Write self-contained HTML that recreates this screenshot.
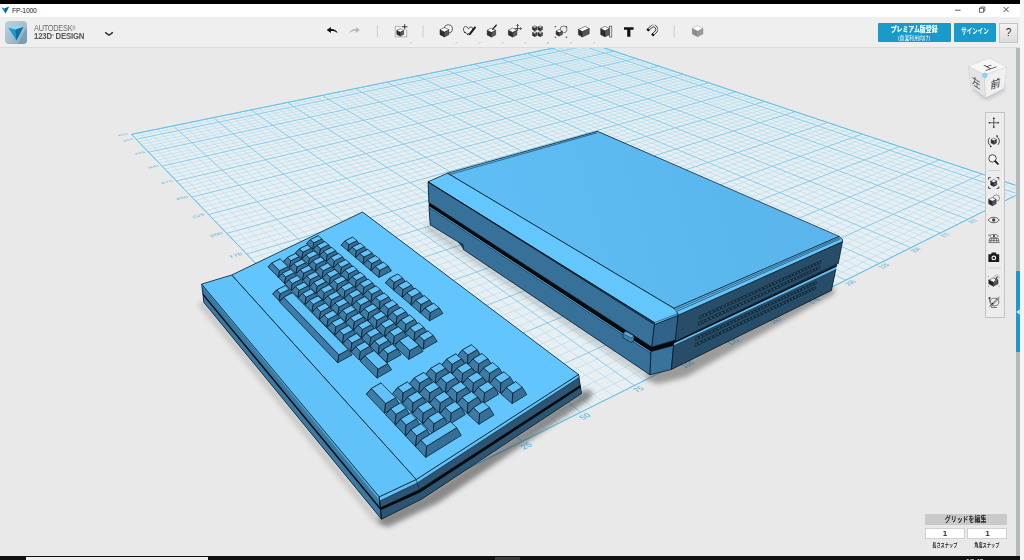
<!DOCTYPE html>
<html lang="ja"><head><meta charset="utf-8"><title>FP-1000</title>
<style>
html,body{margin:0;padding:0;background:#e9e9e9;}
body{width:1024px;height:560px;overflow:hidden;position:relative;font-family:"Liberation Sans","Noto Sans CJK JP",sans-serif;}
.abs{position:absolute;}
#blk{left:0;top:0;width:1020px;height:4px;background:#000;}
#rstrip{left:1020px;top:0;width:4px;height:560px;background:#f5f5f5;}
#title{left:0;top:4px;width:1020px;height:13px;background:#fff;}
#title span{position:absolute;left:12px;top:1.5px;font-size:6.8px;color:#222;letter-spacing:-0.2px;line-height:9px;}
#tb{left:0;top:17px;width:1020px;height:29.6px;background:#efefef;border-bottom:1.4px solid #dcdcdc;}
#vp{left:0;top:48px;width:1020px;height:508px;background:#e9e9e9;}
#scene{left:0;top:0;}
#bot{left:0;top:556px;width:1020px;height:4px;background:#101010;overflow:hidden;}
#bot i{position:absolute;top:0.5px;height:4px;display:block;}
#scroll{left:1015.6px;top:48px;width:4.4px;height:508px;background:#b1b9b9;}
#scrollb{left:1015.6px;top:271.4px;width:4.4px;height:81px;background:#1a9bcb;}
.btn{background:#189bcb;color:#fff;text-align:center;font-weight:bold;border-radius:1px;}
#prem{left:878.3px;top:23px;width:72.3px;height:18.6px;}
#prem b{display:block;font-size:7.6px;line-height:9px;margin-top:2px;white-space:nowrap;transform:scaleX(0.78);transform-origin:50% 50%;margin-left:-10px;margin-right:-10px;}
#prem s{display:block;font-size:5.4px;white-space:nowrap;transform:scaleX(0.9);transform-origin:50% 50%;line-height:6px;text-decoration:none;font-weight:normal;margin-top:0.5px;}
#sign{left:953.9px;top:23px;width:42px;height:18.6px;font-size:7.6px;line-height:18.6px;white-space:nowrap;}
#sign span{display:inline-block;transform:scaleX(0.73);transform-origin:50% 50%;margin:0 -8px;}
#help{left:999.2px;top:23px;width:16.8px;height:17.6px;background:linear-gradient(#f4f4f4,#dcdcdc);border:0.5px solid #c4c4c4;color:#222;font-size:10px;font-weight:normal;text-align:center;line-height:18px;}
#nav{left:984.5px;top:112px;width:18px;height:203.5px;background:#ececec;border:0.6px solid #c4c4c4;}
#gridhdr{left:924.8px;top:513.5px;width:82px;height:11px;background:#c9c9c9;font-size:7.6px;font-weight:bold;color:#222;text-align:center;line-height:11px;white-space:nowrap;}
#gridhdr span{display:inline-block;transform:scaleX(0.78);transform-origin:50% 50%;}
.inp{top:527.9px;width:38px;height:9.4px;background:#fff;border:0.5px solid #d0d0d0;font-size:8px;font-weight:bold;text-align:center;line-height:10px;color:#333;}
.snl{top:541.5px;width:50px;font-size:5.6px;font-weight:bold;color:#222;text-align:center;line-height:7px;white-space:nowrap;}
.snl span{display:inline-block;transform:scaleX(0.75);transform-origin:50% 50%;}
#logo{left:4.5px;top:21px;width:22.5px;height:22.5px;border-radius:4px;background:linear-gradient(135deg,#c3d1da 0%,#a9bfcc 50%,#7fa3ba 100%);}
#brand1{left:34px;top:23.5px;font-size:8.4px;color:#6a6a6a;letter-spacing:-0.3px;line-height:9px;transform:scaleX(0.88);transform-origin:0 0;}
#brand2{left:34px;top:32px;font-size:8.4px;color:#555;font-weight:bold;letter-spacing:-0.2px;line-height:9px;transform:scaleX(0.93);transform-origin:0 0;}
</style></head><body>
<div class="abs" id="vp"></div>
<svg class="abs" id="scene" width="1024" height="560" viewBox="0 0 1024 560">
<defs>
<clipPath id="vpclip"><rect x="0" y="48" width="1015.6" height="508"/></clipPath>
<filter id="blur5" x="-20%" y="-20%" width="140%" height="140%"><feGaussianBlur stdDeviation="4"/></filter>
<filter id="blur3" x="-20%" y="-20%" width="140%" height="140%"><feGaussianBlur stdDeviation="2.5"/></filter>
</defs>
<g clip-path="url(#vpclip)">
<polygon points="458.0,473.4 1027.8,189.4 585.3,41.6 131.5,134.4" fill="#e8eff2" />
<path d="M471.3 466.8L140.0 132.7M449.3 464.4L1018.3 186.2M484.4 460.3L148.5 130.9M440.8 455.6L1009.0 183.1M497.2 453.9L156.9 129.2M432.6 447.1L999.8 180.1M509.8 447.6L165.2 127.5M424.5 438.7L990.8 177.0M534.3 435.4L181.5 124.2M409.0 422.6L973.1 171.1M546.3 429.4L189.6 122.5M401.5 414.8L964.4 168.2M558.0 423.6L197.5 120.9M394.2 407.2L955.9 165.4M569.5 417.9L205.4 119.3M387.1 399.8L947.5 162.6M591.8 406.7L221.0 116.1M373.3 385.5L931.0 157.1M602.7 401.3L228.7 114.5M366.7 378.6L923.0 154.4M613.4 395.9L236.3 113.0M360.2 371.9L915.0 151.7M624.0 390.7L243.8 111.4M353.8 365.3L907.2 149.1M644.5 380.5L258.6 108.4M341.5 352.5L891.8 144.0M654.5 375.5L266.0 106.9M335.6 346.3L884.3 141.5M664.3 370.6L273.2 105.4M329.7 340.3L876.9 139.0M674.0 365.8L280.4 104.0M324.0 334.3L869.6 136.6M692.8 356.4L294.6 101.1M313.0 322.9L855.3 131.8M702.0 351.8L301.6 99.6M307.6 317.3L848.2 129.4M711.1 347.3L308.5 98.2M302.3 311.8L841.3 127.1M720.0 342.8L315.4 96.8M297.2 306.5L834.4 124.8M737.4 334.1L328.9 94.0M287.2 296.1L821.0 120.3M745.9 329.9L335.6 92.7M282.3 291.0L814.4 118.1M754.3 325.7L342.2 91.3M277.6 286.1L807.9 115.9M762.6 321.6L348.8 90.0M272.9 281.3L801.5 113.8M778.7 313.6L361.8 87.3M263.8 271.8L788.9 109.6M786.6 309.6L368.2 86.0M259.4 267.2L782.7 107.5M794.3 305.8L374.5 84.7M255.1 262.7L776.6 105.5M802.0 302.0L380.8 83.4M250.8 258.3L770.5 103.5M817.0 294.5L393.2 80.9M242.5 249.7L758.7 99.5M824.3 290.8L399.3 79.6M238.5 245.5L752.9 97.6M831.5 287.2L405.4 78.4M234.5 241.4L747.1 95.6M838.6 283.7L411.4 77.2M230.6 237.3L741.4 93.7M852.6 276.7L423.3 74.7M223.0 229.5L730.3 90.0M859.4 273.3L429.2 73.5M219.3 225.6L724.8 88.2M866.1 270.0L435.1 72.3M215.7 221.8L719.3 86.4M872.8 266.7L440.8 71.1M212.1 218.1L714.0 84.6M885.8 260.2L452.2 68.8M205.1 210.9L703.4 81.0M892.2 257.0L457.9 67.7M201.7 207.3L698.3 79.3M898.5 253.9L463.5 66.5M198.4 203.9L693.1 77.6M904.7 250.8L469.0 65.4M195.1 200.4L688.1 75.9M916.8 244.7L480.0 63.1M188.6 193.8L678.1 72.6M922.8 241.7L485.4 62.0M185.5 190.5L673.2 70.9M928.7 238.8L490.8 60.9M182.4 187.3L668.3 69.3M934.5 235.9L496.1 59.8M179.4 184.1L663.6 67.7M945.9 230.2L506.7 57.7M173.4 177.9L654.1 64.6M951.5 227.4L511.9 56.6M170.5 174.9L649.5 63.0M957.1 224.7L517.0 55.6M167.6 171.9L644.9 61.5M962.5 221.9L522.2 54.5M164.8 169.0L640.3 60.0M973.2 216.6L532.3 52.4M159.3 163.2L631.4 57.0M978.5 214.0L537.3 51.4M156.6 160.4L627.0 55.5M983.7 211.4L542.3 50.4M153.9 157.7L622.6 54.0M988.8 208.8L547.2 49.4M151.3 154.9L618.3 52.6M998.9 203.8L557.0 47.4M146.1 149.6L609.8 49.8M1003.9 201.3L561.8 46.4M143.6 147.0L605.6 48.4M1008.8 198.9L566.6 45.4M141.1 144.4L601.5 47.0M1013.6 196.5L571.3 44.5M138.7 141.8L597.4 45.6M1023.1 191.7L580.7 42.5M133.9 136.9L589.3 42.9" stroke="#a6d9ee" stroke-width="0.65" fill="none" opacity="0.8"/>
<path d="M458.0 473.4L131.5 134.4M458.0 473.4L1027.8 189.4M522.2 441.4L173.4 125.9M416.7 430.5L981.9 174.1M580.7 412.2L213.3 117.7M380.1 392.6L939.2 159.8M634.3 385.5L251.3 109.9M347.6 358.8L899.5 146.5M683.5 361.0L287.5 102.5M318.4 328.5L862.4 134.1M728.8 338.4L322.2 95.4M292.1 301.2L827.7 122.5M770.7 317.6L355.3 88.6M268.3 276.5L795.1 111.7M809.5 298.2L387.0 82.2M246.6 254.0L764.6 101.5M845.7 280.2L417.4 75.9M226.8 233.4L735.8 91.9M879.3 263.4L446.6 70.0M208.6 214.5L708.7 82.8M910.8 247.7L474.5 64.3M191.8 197.1L683.1 74.2M940.3 233.0L501.4 58.8M176.4 181.0L658.8 66.1M967.9 219.3L527.2 53.5M162.0 166.1L635.8 58.5M993.9 206.3L552.1 48.4M148.7 152.2L614.0 51.2M1018.4 194.1L576.0 43.5M136.2 139.3L593.3 44.3M1027.8 189.4L585.3 41.6M131.5 134.4L585.3 41.6" stroke="#78c8e9" stroke-width="0.85" fill="none"/>
<polygon points="458.0,473.4 1027.8,189.4 585.3,41.6 131.5,134.4" fill="none" stroke="#66c1e7" stroke-width="0.95" stroke-linejoin="round" />
<g font-family="Liberation Sans, sans-serif" fill="#47b1de"><text transform="matrix(2.138 -0.629 0.822 0.861 242.93 254.39)" font-size="3.6" text-anchor="end">175</text><text transform="matrix(2.072 -0.575 0.753 0.789 223.24 233.76)" font-size="3.6" text-anchor="end">200</text><text transform="matrix(2.009 -0.528 0.692 0.725 205.17 214.83)" font-size="3.6" text-anchor="end">225</text><text transform="matrix(1.949 -0.487 0.639 0.669 188.53 197.40)" font-size="3.6" text-anchor="end">250</text><text transform="matrix(1.892 -0.450 0.591 0.619 173.16 181.30)" font-size="3.6" text-anchor="end">275</text><text transform="matrix(1.838 -0.417 0.549 0.575 158.92 166.37)" font-size="3.6" text-anchor="end">300</text><text transform="matrix(1.788 -0.388 0.510 0.535 145.68 152.50)" font-size="3.6" text-anchor="end">325</text><text transform="matrix(1.739 -0.361 0.476 0.499 133.35 139.58)" font-size="3.6" text-anchor="end">350</text><text transform="matrix(1.719 -0.351 0.462 0.484 128.18 134.17)" font-size="3.6" text-anchor="end">360</text><text transform="matrix(2.460 -1.244 1.868 1.693 528.15 447.82)" font-size="3.3" text-anchor="middle">25</text><text transform="matrix(2.245 -1.135 1.926 1.546 586.95 418.09)" font-size="3.3" text-anchor="middle">50</text><text transform="matrix(2.056 -1.040 1.967 1.417 640.71 390.91)" font-size="3.3" text-anchor="middle">75</text><text transform="matrix(1.890 -0.956 1.994 1.304 690.03 365.97)" font-size="3.3" text-anchor="middle">100</text><text transform="matrix(1.744 -0.882 2.012 1.204 735.46 343.01)" font-size="3.3" text-anchor="middle">125</text><text transform="matrix(1.614 -0.816 2.021 1.115 777.43 321.79)" font-size="3.3" text-anchor="middle">150</text><text transform="matrix(1.498 -0.757 2.023 1.035 816.32 302.13)" font-size="3.3" text-anchor="middle">175</text><text transform="matrix(1.394 -0.705 2.020 0.964 852.46 283.85)" font-size="3.3" text-anchor="middle">200</text><text transform="matrix(1.300 -0.657 2.012 0.900 886.14 266.83)" font-size="3.3" text-anchor="middle">225</text><text transform="matrix(1.216 -0.615 2.002 0.842 917.59 250.92)" font-size="3.3" text-anchor="middle">250</text><text transform="matrix(1.139 -0.576 1.988 0.790 947.03 236.04)" font-size="3.3" text-anchor="middle">275</text><text transform="matrix(1.070 -0.541 1.972 0.742 974.65 222.08)" font-size="3.3" text-anchor="middle">300</text><text transform="matrix(1.006 -0.509 1.955 0.699 1000.60 208.95)" font-size="3.3" text-anchor="middle">325</text><text transform="matrix(0.949 -0.480 1.936 0.659 1025.05 196.60)" font-size="3.3" text-anchor="middle">350</text></g>
<g filter="url(#blur3)" opacity="0.42"><polygon points="648.0,370.0 672.0,366.0 832.0,286.0 835.0,293.0 686.0,377.0 658.0,384.0 646.0,380.0" fill="#303030" /></g>
<g filter="url(#blur3)" opacity="0.16"><polygon points="430.0,222.0 650.0,372.0 645.0,379.0 424.0,230.0" fill="#333" /></g>
<polygon points="428.0,181.8 428.9,206.4 430.2,224.8 457.5,241.6 463.5,249.6 650.0,374.8 671.4,369.5 831.4,290.4 835.9,269.0 842.5,241.6 842.3,239.0 597.5,131.3 447.5,173.2" fill="#274a64" />
<polygon points="428.9,206.4 650.9,351.6 650.0,374.8 463.5,249.6 463.0,244.6 457.5,241.6 430.2,224.8" fill="#37719a" stroke="#09131b" stroke-width="0.7" stroke-linejoin="round" />
<polygon points="428.9,202.5 651.8,347.1 675.9,340.0 673.6,345.6 650.9,351.8 428.9,206.6" fill="#06090c" />
<line x1="429.5" y1="207.0" x2="650.9" y2="352.2" stroke="#5bb6ec" stroke-width="0.9" />
<line x1="429.5" y1="207.9" x2="650.9" y2="353.1" stroke="#09131b" stroke-width="0.4" />
<polygon points="650.9,351.6 673.6,345.4 671.4,369.5 650.0,374.8" fill="#38739b" stroke="#09131b" stroke-width="0.7" stroke-linejoin="round" />
<polygon points="673.6,345.4 835.9,269.0 831.4,290.4 671.4,369.5" fill="#284d68" stroke="#09131b" stroke-width="0.7" stroke-linejoin="round" />
<polygon points="673.6,345.6 835.9,269.2 836.5,266.6 674.4,343.0" fill="#5fbdf3" />
<polygon points="674.4,343.0 836.5,266.6 837.2,265.0 675.0,341.5" fill="#06090c" />
<polygon points="428.0,181.8 654.5,324.6 651.8,347.1 428.9,202.5" fill="#37719a" stroke="#09131b" stroke-width="0.7" stroke-linejoin="round" />
<polygon points="654.5,324.6 678.0,315.2 675.9,340.0 651.8,347.1" fill="#30638a" stroke="#09131b" stroke-width="0.7" stroke-linejoin="round" />
<polygon points="678.0,315.2 842.5,241.6 838.3,263.4 675.2,341.4" fill="#284d68" stroke="#09131b" stroke-width="0.7" stroke-linejoin="round" />
<polygon points="623.0,333.5 626.0,331.3 634.0,336.0 634.0,341.0 631.0,342.5 623.0,337.8" fill="#3f7fa8" stroke="#09131b" stroke-width="0.6" stroke-linejoin="round" />
<polygon points="623.0,333.5 626.0,331.3 634.0,336.0 631.0,338.0" fill="#5aa6d4" stroke="#09131b" stroke-width="0.4" stroke-linejoin="round" />
<defs><linearGradient id="gtop" gradientUnits="userSpaceOnUse" x1="470" y1="260" x2="800" y2="170"><stop offset="0" stop-color="#5fbef5"/><stop offset="1" stop-color="#59b5ec"/></linearGradient></defs>
<polygon points="447.5,173.2 597.5,131.3 839.3,236.4 674.0,308.4" fill="url(#gtop)" stroke="#09131b" stroke-width="0.7" stroke-linejoin="round" />
<polygon points="447.5,173.2 428.0,181.8 654.5,322.7 654.5,324.6 678.0,315.2 678.0,313.5 674.0,308.4" fill="#63c7fd" stroke="#09131b" stroke-width="0.7" stroke-linejoin="round" />
<line x1="654.5" y1="322.7" x2="678.0" y2="313.5" stroke="#09131b" stroke-width="0.5" />
<line x1="428.0" y1="181.8" x2="654.5" y2="322.7" stroke="#09131b" stroke-width="0.8" />
<polygon points="674.0,308.4 839.3,236.4 842.3,239.0 842.5,241.6 678.0,315.2 678.0,313.5" fill="#63c7fd" stroke="#09131b" stroke-width="0.6" stroke-linejoin="round" />
<polygon points="674.0,308.4 839.3,236.4 840.9,239.0 676.1,311.9" fill="#5cb9f0" />
<line x1="674.0" y1="308.4" x2="839.3" y2="236.4" stroke="#13222f" stroke-width="0.55" />
<line x1="675.0" y1="310.0" x2="840.0" y2="237.5" stroke="#13222f" stroke-width="0.55" />
<line x1="676.0" y1="311.8" x2="840.7" y2="238.7" stroke="#13222f" stroke-width="0.55" />
<line x1="449.5" y1="174.6" x2="597.0" y2="132.8" stroke="#09131b" stroke-width="0.5" />
<polygon points="699.4,316.3 702.0,315.1 702.0,317.7 699.4,318.9" fill="#30607f" stroke="#08121a" stroke-width="0.6" stroke-linejoin="round" /><polygon points="703.1,314.6 705.7,313.4 705.7,316.0 703.1,317.2" fill="#30607f" stroke="#08121a" stroke-width="0.6" stroke-linejoin="round" /><polygon points="706.8,312.9 709.4,311.7 709.4,314.3 706.8,315.5" fill="#30607f" stroke="#08121a" stroke-width="0.6" stroke-linejoin="round" /><polygon points="710.5,311.2 713.1,310.0 713.1,312.6 710.5,313.8" fill="#30607f" stroke="#08121a" stroke-width="0.6" stroke-linejoin="round" /><polygon points="714.2,309.5 716.8,308.3 716.8,310.9 714.2,312.1" fill="#30607f" stroke="#08121a" stroke-width="0.6" stroke-linejoin="round" /><polygon points="717.8,307.8 720.4,306.7 720.4,309.2 717.8,310.4" fill="#30607f" stroke="#08121a" stroke-width="0.6" stroke-linejoin="round" /><polygon points="721.5,306.2 724.0,305.0 724.0,307.6 721.5,308.8" fill="#30607f" stroke="#08121a" stroke-width="0.6" stroke-linejoin="round" /><polygon points="725.1,304.5 727.6,303.3 727.6,305.9 725.1,307.1" fill="#30607f" stroke="#08121a" stroke-width="0.6" stroke-linejoin="round" /><polygon points="728.7,302.9 731.2,301.7 731.2,304.3 728.7,305.5" fill="#30607f" stroke="#08121a" stroke-width="0.6" stroke-linejoin="round" /><polygon points="732.2,301.3 734.8,300.1 734.8,302.6 732.2,303.8" fill="#30607f" stroke="#08121a" stroke-width="0.6" stroke-linejoin="round" /><polygon points="735.8,299.6 738.3,298.5 738.3,301.0 735.8,302.2" fill="#30607f" stroke="#08121a" stroke-width="0.6" stroke-linejoin="round" /><polygon points="739.3,298.0 741.9,296.8 741.9,299.4 739.3,300.6" fill="#30607f" stroke="#08121a" stroke-width="0.6" stroke-linejoin="round" /><polygon points="742.8,296.4 745.4,295.2 745.4,297.8 742.8,298.9" fill="#30607f" stroke="#08121a" stroke-width="0.6" stroke-linejoin="round" /><polygon points="746.3,294.8 748.9,293.6 748.9,296.2 746.3,297.3" fill="#30607f" stroke="#08121a" stroke-width="0.6" stroke-linejoin="round" /><polygon points="749.8,293.2 752.3,292.1 752.3,294.6 749.8,295.7" fill="#30607f" stroke="#08121a" stroke-width="0.6" stroke-linejoin="round" /><polygon points="753.3,291.6 755.8,290.5 755.8,293.0 753.3,294.1" fill="#30607f" stroke="#08121a" stroke-width="0.6" stroke-linejoin="round" /><polygon points="756.7,290.1 759.2,288.9 759.2,291.4 756.7,292.6" fill="#30607f" stroke="#08121a" stroke-width="0.6" stroke-linejoin="round" /><polygon points="760.1,288.5 762.6,287.4 762.6,289.8 760.1,291.0" fill="#30607f" stroke="#08121a" stroke-width="0.6" stroke-linejoin="round" /><polygon points="763.5,286.9 766.0,285.8 766.0,288.3 763.5,289.4" fill="#30607f" stroke="#08121a" stroke-width="0.6" stroke-linejoin="round" /><polygon points="766.9,285.4 769.4,284.3 769.4,286.7 766.9,287.9" fill="#30607f" stroke="#08121a" stroke-width="0.6" stroke-linejoin="round" /><polygon points="770.3,283.9 772.7,282.7 772.7,285.2 770.3,286.3" fill="#30607f" stroke="#08121a" stroke-width="0.6" stroke-linejoin="round" /><polygon points="773.6,282.3 776.1,281.2 776.1,283.7 773.6,284.8" fill="#30607f" stroke="#08121a" stroke-width="0.6" stroke-linejoin="round" /><polygon points="776.9,280.8 779.4,279.7 779.4,282.1 776.9,283.3" fill="#30607f" stroke="#08121a" stroke-width="0.6" stroke-linejoin="round" /><polygon points="780.2,279.3 782.7,278.2 782.7,280.6 780.2,281.7" fill="#30607f" stroke="#08121a" stroke-width="0.6" stroke-linejoin="round" /><polygon points="783.5,277.8 785.9,276.7 785.9,279.1 783.5,280.2" fill="#30607f" stroke="#08121a" stroke-width="0.6" stroke-linejoin="round" /><polygon points="786.8,276.3 789.2,275.2 789.2,277.6 786.8,278.7" fill="#30607f" stroke="#08121a" stroke-width="0.6" stroke-linejoin="round" /><polygon points="790.0,274.8 792.4,273.7 792.4,276.1 790.0,277.2" fill="#30607f" stroke="#08121a" stroke-width="0.6" stroke-linejoin="round" /><polygon points="793.2,273.3 795.6,272.2 795.6,274.6 793.2,275.7" fill="#30607f" stroke="#08121a" stroke-width="0.6" stroke-linejoin="round" /><polygon points="796.4,271.9 798.8,270.8 798.8,273.2 796.4,274.3" fill="#30607f" stroke="#08121a" stroke-width="0.6" stroke-linejoin="round" /><polygon points="799.6,270.4 802.0,269.3 802.0,271.7 799.6,272.8" fill="#30607f" stroke="#08121a" stroke-width="0.6" stroke-linejoin="round" /><polygon points="802.8,269.0 805.2,267.9 805.2,270.3 802.8,271.3" fill="#30607f" stroke="#08121a" stroke-width="0.6" stroke-linejoin="round" /><polygon points="805.9,267.5 808.3,266.5 808.3,268.8 805.9,269.9" fill="#30607f" stroke="#08121a" stroke-width="0.6" stroke-linejoin="round" /><polygon points="809.1,266.1 811.4,265.0 811.4,267.4 809.1,268.5" fill="#30607f" stroke="#08121a" stroke-width="0.6" stroke-linejoin="round" /><polygon points="812.2,264.7 814.5,263.6 814.5,266.0 812.2,267.0" fill="#30607f" stroke="#08121a" stroke-width="0.6" stroke-linejoin="round" /><polygon points="815.3,263.3 817.6,262.2 817.6,264.5 815.3,265.6" fill="#30607f" stroke="#08121a" stroke-width="0.6" stroke-linejoin="round" /><polygon points="818.3,261.9 820.7,260.8 820.7,263.1 818.3,264.2" fill="#30607f" stroke="#08121a" stroke-width="0.6" stroke-linejoin="round" /><polygon points="698.5,322.5 701.1,321.3 701.1,323.9 698.5,325.1" fill="#30607f" stroke="#08121a" stroke-width="0.6" stroke-linejoin="round" /><polygon points="702.2,320.8 704.8,319.5 704.8,322.2 702.2,323.4" fill="#30607f" stroke="#08121a" stroke-width="0.6" stroke-linejoin="round" /><polygon points="705.9,319.0 708.5,317.8 708.5,320.4 705.9,321.7" fill="#30607f" stroke="#08121a" stroke-width="0.6" stroke-linejoin="round" /><polygon points="709.6,317.3 712.2,316.1 712.2,318.7 709.6,319.9" fill="#30607f" stroke="#08121a" stroke-width="0.6" stroke-linejoin="round" /><polygon points="713.3,315.6 715.9,314.4 715.9,317.0 713.3,318.2" fill="#30607f" stroke="#08121a" stroke-width="0.6" stroke-linejoin="round" /><polygon points="716.9,313.9 719.5,312.7 719.5,315.3 716.9,316.5" fill="#30607f" stroke="#08121a" stroke-width="0.6" stroke-linejoin="round" /><polygon points="720.6,312.2 723.1,311.0 723.1,313.6 720.6,314.8" fill="#30607f" stroke="#08121a" stroke-width="0.6" stroke-linejoin="round" /><polygon points="724.2,310.6 726.7,309.4 726.7,312.0 724.2,313.1" fill="#30607f" stroke="#08121a" stroke-width="0.6" stroke-linejoin="round" /><polygon points="727.8,308.9 730.3,307.7 730.3,310.3 727.8,311.5" fill="#30607f" stroke="#08121a" stroke-width="0.6" stroke-linejoin="round" /><polygon points="731.3,307.2 733.9,306.1 733.9,308.6 731.3,309.8" fill="#30607f" stroke="#08121a" stroke-width="0.6" stroke-linejoin="round" /><polygon points="734.9,305.6 737.4,304.4 737.4,307.0 734.9,308.1" fill="#30607f" stroke="#08121a" stroke-width="0.6" stroke-linejoin="round" /><polygon points="738.4,303.9 741.0,302.8 741.0,305.3 738.4,306.5" fill="#30607f" stroke="#08121a" stroke-width="0.6" stroke-linejoin="round" /><polygon points="741.9,302.3 744.5,301.1 744.5,303.7 741.9,304.8" fill="#30607f" stroke="#08121a" stroke-width="0.6" stroke-linejoin="round" /><polygon points="745.4,300.7 748.0,299.5 748.0,302.0 745.4,303.2" fill="#30607f" stroke="#08121a" stroke-width="0.6" stroke-linejoin="round" /><polygon points="748.9,299.1 751.4,297.9 751.4,300.4 748.9,301.6" fill="#30607f" stroke="#08121a" stroke-width="0.6" stroke-linejoin="round" /><polygon points="752.4,297.5 754.9,296.3 754.9,298.8 752.4,300.0" fill="#30607f" stroke="#08121a" stroke-width="0.6" stroke-linejoin="round" /><polygon points="755.8,295.9 758.3,294.7 758.3,297.2 755.8,298.4" fill="#30607f" stroke="#08121a" stroke-width="0.6" stroke-linejoin="round" /><polygon points="759.2,294.3 761.7,293.1 761.7,295.6 759.2,296.8" fill="#30607f" stroke="#08121a" stroke-width="0.6" stroke-linejoin="round" /><polygon points="762.6,292.7 765.1,291.6 765.1,294.0 762.6,295.2" fill="#30607f" stroke="#08121a" stroke-width="0.6" stroke-linejoin="round" /><polygon points="766.0,291.1 768.5,290.0 768.5,292.5 766.0,293.6" fill="#30607f" stroke="#08121a" stroke-width="0.6" stroke-linejoin="round" /><polygon points="769.4,289.6 771.8,288.5 771.8,290.9 769.4,292.0" fill="#30607f" stroke="#08121a" stroke-width="0.6" stroke-linejoin="round" /><polygon points="772.7,288.0 775.2,286.9 775.2,289.4 772.7,290.5" fill="#30607f" stroke="#08121a" stroke-width="0.6" stroke-linejoin="round" /><polygon points="776.0,286.5 778.5,285.4 778.5,287.8 776.0,288.9" fill="#30607f" stroke="#08121a" stroke-width="0.6" stroke-linejoin="round" /><polygon points="779.3,285.0 781.8,283.8 781.8,286.3 779.3,287.4" fill="#30607f" stroke="#08121a" stroke-width="0.6" stroke-linejoin="round" /><polygon points="782.6,283.4 785.0,282.3 785.0,284.7 782.6,285.9" fill="#30607f" stroke="#08121a" stroke-width="0.6" stroke-linejoin="round" /><polygon points="785.9,281.9 788.3,280.8 788.3,283.2 785.9,284.3" fill="#30607f" stroke="#08121a" stroke-width="0.6" stroke-linejoin="round" /><polygon points="789.1,280.4 791.5,279.3 791.5,281.7 789.1,282.8" fill="#30607f" stroke="#08121a" stroke-width="0.6" stroke-linejoin="round" /><polygon points="792.3,278.9 794.7,277.8 794.7,280.2 792.3,281.3" fill="#30607f" stroke="#08121a" stroke-width="0.6" stroke-linejoin="round" /><polygon points="795.5,277.4 797.9,276.3 797.9,278.7 795.5,279.8" fill="#30607f" stroke="#08121a" stroke-width="0.6" stroke-linejoin="round" /><polygon points="798.7,276.0 801.1,274.9 801.1,277.2 798.7,278.3" fill="#30607f" stroke="#08121a" stroke-width="0.6" stroke-linejoin="round" /><polygon points="801.9,274.5 804.3,273.4 804.3,275.8 801.9,276.9" fill="#30607f" stroke="#08121a" stroke-width="0.6" stroke-linejoin="round" /><polygon points="805.0,273.0 807.4,271.9 807.4,274.3 805.0,275.4" fill="#30607f" stroke="#08121a" stroke-width="0.6" stroke-linejoin="round" /><polygon points="808.2,271.6 810.5,270.5 810.5,272.8 808.2,273.9" fill="#30607f" stroke="#08121a" stroke-width="0.6" stroke-linejoin="round" /><polygon points="811.3,270.1 813.6,269.1 813.6,271.4 811.3,272.5" fill="#30607f" stroke="#08121a" stroke-width="0.6" stroke-linejoin="round" /><polygon points="814.4,268.7 816.7,267.6 816.7,270.0 814.4,271.0" fill="#30607f" stroke="#08121a" stroke-width="0.6" stroke-linejoin="round" /><polygon points="817.4,267.3 819.8,266.2 819.8,268.5 817.4,269.6" fill="#30607f" stroke="#08121a" stroke-width="0.6" stroke-linejoin="round" /><polygon points="695.8,337.7 698.4,336.5 698.4,339.1 695.8,340.3" fill="#30607f" stroke="#08121a" stroke-width="0.6" stroke-linejoin="round" /><polygon points="699.5,336.0 702.1,334.7 702.1,337.4 699.5,338.6" fill="#30607f" stroke="#08121a" stroke-width="0.6" stroke-linejoin="round" /><polygon points="703.2,334.2 705.8,333.0 705.8,335.6 703.2,336.8" fill="#30607f" stroke="#08121a" stroke-width="0.6" stroke-linejoin="round" /><polygon points="706.8,332.5 709.4,331.3 709.4,333.9 706.8,335.1" fill="#30607f" stroke="#08121a" stroke-width="0.6" stroke-linejoin="round" /><polygon points="710.5,330.8 713.1,329.6 713.1,332.2 710.5,333.4" fill="#30607f" stroke="#08121a" stroke-width="0.6" stroke-linejoin="round" /><polygon points="714.1,329.1 716.7,327.9 716.7,330.5 714.1,331.7" fill="#30607f" stroke="#08121a" stroke-width="0.6" stroke-linejoin="round" /><polygon points="717.7,327.4 720.3,326.2 720.3,328.8 717.7,330.0" fill="#30607f" stroke="#08121a" stroke-width="0.6" stroke-linejoin="round" /><polygon points="721.3,325.7 723.9,324.6 723.9,327.1 721.3,328.3" fill="#30607f" stroke="#08121a" stroke-width="0.6" stroke-linejoin="round" /><polygon points="724.8,324.1 727.4,322.9 727.4,325.5 724.8,326.6" fill="#30607f" stroke="#08121a" stroke-width="0.6" stroke-linejoin="round" /><polygon points="728.4,322.4 730.9,321.2 730.9,323.8 728.4,325.0" fill="#30607f" stroke="#08121a" stroke-width="0.6" stroke-linejoin="round" /><polygon points="731.9,320.8 734.5,319.6 734.5,322.1 731.9,323.3" fill="#30607f" stroke="#08121a" stroke-width="0.6" stroke-linejoin="round" /><polygon points="735.4,319.1 738.0,317.9 738.0,320.5 735.4,321.6" fill="#30607f" stroke="#08121a" stroke-width="0.6" stroke-linejoin="round" /><polygon points="738.9,317.5 741.4,316.3 741.4,318.8 738.9,320.0" fill="#30607f" stroke="#08121a" stroke-width="0.6" stroke-linejoin="round" /><polygon points="742.4,315.8 744.9,314.7 744.9,317.2 742.4,318.4" fill="#30607f" stroke="#08121a" stroke-width="0.6" stroke-linejoin="round" /><polygon points="745.8,314.2 748.3,313.1 748.3,315.6 745.8,316.7" fill="#30607f" stroke="#08121a" stroke-width="0.6" stroke-linejoin="round" /><polygon points="749.3,312.6 751.8,311.5 751.8,314.0 749.3,315.1" fill="#30607f" stroke="#08121a" stroke-width="0.6" stroke-linejoin="round" /><polygon points="752.7,311.0 755.2,309.9 755.2,312.4 752.7,313.5" fill="#30607f" stroke="#08121a" stroke-width="0.6" stroke-linejoin="round" /><polygon points="756.1,309.4 758.6,308.3 758.6,310.8 756.1,311.9" fill="#30607f" stroke="#08121a" stroke-width="0.6" stroke-linejoin="round" /><polygon points="759.4,307.9 761.9,306.7 761.9,309.2 759.4,310.3" fill="#30607f" stroke="#08121a" stroke-width="0.6" stroke-linejoin="round" /><polygon points="762.8,306.3 765.3,305.1 765.3,307.6 762.8,308.8" fill="#30607f" stroke="#08121a" stroke-width="0.6" stroke-linejoin="round" /><polygon points="766.1,304.7 768.6,303.6 768.6,306.1 766.1,307.2" fill="#30607f" stroke="#08121a" stroke-width="0.6" stroke-linejoin="round" /><polygon points="769.4,303.2 771.9,302.0 771.9,304.5 769.4,305.6" fill="#30607f" stroke="#08121a" stroke-width="0.6" stroke-linejoin="round" /><polygon points="772.7,301.6 775.2,300.5 775.2,302.9 772.7,304.1" fill="#30607f" stroke="#08121a" stroke-width="0.6" stroke-linejoin="round" /><polygon points="776.0,300.1 778.4,299.0 778.4,301.4 776.0,302.5" fill="#30607f" stroke="#08121a" stroke-width="0.6" stroke-linejoin="round" /><polygon points="779.3,298.6 781.7,297.4 781.7,299.9 779.3,301.0" fill="#30607f" stroke="#08121a" stroke-width="0.6" stroke-linejoin="round" /><polygon points="782.5,297.0 784.9,295.9 784.9,298.3 782.5,299.5" fill="#30607f" stroke="#08121a" stroke-width="0.6" stroke-linejoin="round" /><polygon points="785.7,295.5 788.1,294.4 788.1,296.8 785.7,297.9" fill="#30607f" stroke="#08121a" stroke-width="0.6" stroke-linejoin="round" /><polygon points="788.9,294.0 791.3,292.9 791.3,295.3 788.9,296.4" fill="#30607f" stroke="#08121a" stroke-width="0.6" stroke-linejoin="round" /><polygon points="792.1,292.5 794.5,291.5 794.5,293.8 792.1,294.9" fill="#30607f" stroke="#08121a" stroke-width="0.6" stroke-linejoin="round" /><polygon points="795.3,291.1 797.7,290.0 797.7,292.4 795.3,293.4" fill="#30607f" stroke="#08121a" stroke-width="0.6" stroke-linejoin="round" /><polygon points="798.4,289.6 800.8,288.5 800.8,290.9 798.4,292.0" fill="#30607f" stroke="#08121a" stroke-width="0.6" stroke-linejoin="round" /><polygon points="801.5,288.1 803.9,287.0 803.9,289.4 801.5,290.5" fill="#30607f" stroke="#08121a" stroke-width="0.6" stroke-linejoin="round" /><polygon points="804.6,286.7 807.0,285.6 807.0,287.9 804.6,289.0" fill="#30607f" stroke="#08121a" stroke-width="0.6" stroke-linejoin="round" /><polygon points="807.7,285.2 810.1,284.2 810.1,286.5 807.7,287.6" fill="#30607f" stroke="#08121a" stroke-width="0.6" stroke-linejoin="round" /><polygon points="810.8,283.8 813.1,282.7 813.1,285.1 810.8,286.1" fill="#30607f" stroke="#08121a" stroke-width="0.6" stroke-linejoin="round" /><polygon points="813.8,282.4 816.2,281.3 816.2,283.6 813.8,284.7" fill="#30607f" stroke="#08121a" stroke-width="0.6" stroke-linejoin="round" /><polygon points="695.0,343.9 697.6,342.7 697.6,345.3 695.0,346.5" fill="#30607f" stroke="#08121a" stroke-width="0.6" stroke-linejoin="round" /><polygon points="698.7,342.1 701.3,340.9 701.3,343.5 698.7,344.8" fill="#30607f" stroke="#08121a" stroke-width="0.6" stroke-linejoin="round" /><polygon points="702.4,340.4 705.0,339.2 705.0,341.8 702.4,343.0" fill="#30607f" stroke="#08121a" stroke-width="0.6" stroke-linejoin="round" /><polygon points="706.0,338.6 708.6,337.4 708.6,340.0 706.0,341.2" fill="#30607f" stroke="#08121a" stroke-width="0.6" stroke-linejoin="round" /><polygon points="709.7,336.9 712.3,335.7 712.3,338.3 709.7,339.5" fill="#30607f" stroke="#08121a" stroke-width="0.6" stroke-linejoin="round" /><polygon points="713.3,335.2 715.9,334.0 715.9,336.6 713.3,337.8" fill="#30607f" stroke="#08121a" stroke-width="0.6" stroke-linejoin="round" /><polygon points="716.9,333.5 719.5,332.3 719.5,334.9 716.9,336.1" fill="#30607f" stroke="#08121a" stroke-width="0.6" stroke-linejoin="round" /><polygon points="720.5,331.8 723.0,330.6 723.0,333.2 720.5,334.3" fill="#30607f" stroke="#08121a" stroke-width="0.6" stroke-linejoin="round" /><polygon points="724.0,330.1 726.6,328.9 726.6,331.5 724.0,332.6" fill="#30607f" stroke="#08121a" stroke-width="0.6" stroke-linejoin="round" /><polygon points="727.6,328.4 730.1,327.2 730.1,329.8 727.6,330.9" fill="#30607f" stroke="#08121a" stroke-width="0.6" stroke-linejoin="round" /><polygon points="731.1,326.7 733.6,325.5 733.6,328.1 731.1,329.3" fill="#30607f" stroke="#08121a" stroke-width="0.6" stroke-linejoin="round" /><polygon points="734.6,325.0 737.1,323.9 737.1,326.4 734.6,327.6" fill="#30607f" stroke="#08121a" stroke-width="0.6" stroke-linejoin="round" /><polygon points="738.1,323.4 740.6,322.2 740.6,324.7 738.1,325.9" fill="#30607f" stroke="#08121a" stroke-width="0.6" stroke-linejoin="round" /><polygon points="741.5,321.7 744.1,320.6 744.1,323.1 741.5,324.3" fill="#30607f" stroke="#08121a" stroke-width="0.6" stroke-linejoin="round" /><polygon points="745.0,320.1 747.5,318.9 747.5,321.4 745.0,322.6" fill="#30607f" stroke="#08121a" stroke-width="0.6" stroke-linejoin="round" /><polygon points="748.4,318.5 750.9,317.3 750.9,319.8 748.4,321.0" fill="#30607f" stroke="#08121a" stroke-width="0.6" stroke-linejoin="round" /><polygon points="751.8,316.8 754.3,315.7 754.3,318.2 751.8,319.3" fill="#30607f" stroke="#08121a" stroke-width="0.6" stroke-linejoin="round" /><polygon points="755.2,315.2 757.7,314.1 757.7,316.6 755.2,317.7" fill="#30607f" stroke="#08121a" stroke-width="0.6" stroke-linejoin="round" /><polygon points="758.6,313.6 761.1,312.5 761.1,315.0 758.6,316.1" fill="#30607f" stroke="#08121a" stroke-width="0.6" stroke-linejoin="round" /><polygon points="761.9,312.0 764.4,310.9 764.4,313.4 761.9,314.5" fill="#30607f" stroke="#08121a" stroke-width="0.6" stroke-linejoin="round" /><polygon points="765.3,310.4 767.7,309.3 767.7,311.8 765.3,312.9" fill="#30607f" stroke="#08121a" stroke-width="0.6" stroke-linejoin="round" /><polygon points="768.6,308.9 771.0,307.7 771.0,310.2 768.6,311.3" fill="#30607f" stroke="#08121a" stroke-width="0.6" stroke-linejoin="round" /><polygon points="771.9,307.3 774.3,306.2 774.3,308.6 771.9,309.7" fill="#30607f" stroke="#08121a" stroke-width="0.6" stroke-linejoin="round" /><polygon points="775.1,305.7 777.6,304.6 777.6,307.1 775.1,308.2" fill="#30607f" stroke="#08121a" stroke-width="0.6" stroke-linejoin="round" /><polygon points="778.4,304.2 780.8,303.1 780.8,305.5 778.4,306.6" fill="#30607f" stroke="#08121a" stroke-width="0.6" stroke-linejoin="round" /><polygon points="781.6,302.7 784.1,301.5 784.1,304.0 781.6,305.1" fill="#30607f" stroke="#08121a" stroke-width="0.6" stroke-linejoin="round" /><polygon points="784.9,301.1 787.3,300.0 787.3,302.4 784.9,303.5" fill="#30607f" stroke="#08121a" stroke-width="0.6" stroke-linejoin="round" /><polygon points="788.1,299.6 790.4,298.5 790.4,300.9 788.1,302.0" fill="#30607f" stroke="#08121a" stroke-width="0.6" stroke-linejoin="round" /><polygon points="791.2,298.1 793.6,297.0 793.6,299.4 791.2,300.5" fill="#30607f" stroke="#08121a" stroke-width="0.6" stroke-linejoin="round" /><polygon points="794.4,296.6 796.8,295.5 796.8,297.9 794.4,299.0" fill="#30607f" stroke="#08121a" stroke-width="0.6" stroke-linejoin="round" /><polygon points="797.5,295.1 799.9,294.0 799.9,296.4 797.5,297.5" fill="#30607f" stroke="#08121a" stroke-width="0.6" stroke-linejoin="round" /><polygon points="800.6,293.6 803.0,292.5 803.0,294.9 800.6,296.0" fill="#30607f" stroke="#08121a" stroke-width="0.6" stroke-linejoin="round" /><polygon points="803.8,292.1 806.1,291.1 806.1,293.4 803.8,294.5" fill="#30607f" stroke="#08121a" stroke-width="0.6" stroke-linejoin="round" /><polygon points="806.8,290.7 809.2,289.6 809.2,291.9 806.8,293.0" fill="#30607f" stroke="#08121a" stroke-width="0.6" stroke-linejoin="round" /><polygon points="809.9,289.2 812.2,288.1 812.2,290.5 809.9,291.6" fill="#30607f" stroke="#08121a" stroke-width="0.6" stroke-linejoin="round" /><polygon points="812.9,287.8 815.3,286.7 815.3,289.0 812.9,290.1" fill="#30607f" stroke="#08121a" stroke-width="0.6" stroke-linejoin="round" />
<g filter="url(#blur3)" opacity="0.5"><polygon points="380.0,516.0 424.0,496.0 583.0,390.0 593.0,391.0 590.0,399.0 438.0,503.0 388.0,527.0 378.0,524.0" fill="#2a2a2a" /></g>
<g filter="url(#blur3)" opacity="0.18"><polygon points="203.0,300.0 381.0,519.0 376.0,524.0 198.0,305.0" fill="#333" /></g>
<polygon points="201.6,284.1 231.7,275.0 362.5,212.0 578.5,374.5 581.5,393.5 422.0,499.0 381.5,519.2 203.9,302.4" fill="#2b5572" />
<polygon points="201.6,284.1 379.2,496.8 381.5,519.2 203.9,302.4" fill="#3a79a2" stroke="#09131b" stroke-width="0.7" stroke-linejoin="round" />
<polygon points="202.8,293.2 380.3,507.6 380.6,510.2 203.0,295.6" fill="#06090c" />
<polygon points="201.6,284.1 379.2,496.8 379.5,500.2 201.7,285.2" fill="#55abde" />
<polygon points="379.2,496.8 416.2,479.5 578.5,374.5 581.5,393.5 422.0,499.0 381.5,519.2" fill="#2b5572" stroke="#09131b" stroke-width="0.7" stroke-linejoin="round" />
<polygon points="380.3,507.6 419.2,489.4 580.2,384.9 580.6,387.6 420.1,492.6 380.6,510.2" fill="#06090c" />
<polygon points="379.2,496.8 416.2,479.5 578.5,374.5 579.0,377.5 417.2,483.0 379.6,501.1" fill="#60c2f9" stroke="#09131b" stroke-width="0.5" stroke-linejoin="round" />
<line x1="379.2" y1="496.8" x2="381.5" y2="519.2" stroke="#09131b" stroke-width="0.6" />
<line x1="416.2" y1="479.5" x2="419.1" y2="489.2" stroke="#09131b" stroke-width="0.5" />
<polygon points="231.7,275.0 362.5,212.0 578.5,374.5 416.2,479.5" fill="#62c5fd" stroke="#09131b" stroke-width="0.7" stroke-linejoin="round" />
<polygon points="201.6,284.1 231.7,275.0 416.2,479.5 379.2,496.8" fill="#61c2fa" stroke="#09131b" stroke-width="0.7" stroke-linejoin="round" />
<polygon points="318.7,237.6 306.6,243.4 310.3,239.6 318.2,235.8" fill="#356f97" stroke="#09131b" stroke-width="0.5" stroke-linejoin="round" /><polygon points="306.6,243.4 312.8,249.0 313.9,242.8 310.3,239.6" fill="#3c7ca7" stroke="#09131b" stroke-width="0.7" stroke-linejoin="round" /><polygon points="312.8,249.0 325.0,243.1 321.9,238.9 313.9,242.8" fill="#356f97" stroke="#09131b" stroke-width="0.7" stroke-linejoin="round" /><polygon points="310.3,239.6 313.9,242.8 321.9,238.9 318.2,235.8" fill="#61c2f9" stroke="#09131b" stroke-width="0.7" stroke-linejoin="round" /><polygon points="353.1,239.1 341.0,245.1 344.9,241.0 352.7,237.1" fill="#356f97" stroke="#09131b" stroke-width="0.5" stroke-linejoin="round" /><polygon points="341.0,245.1 348.0,250.9 349.0,244.5 344.9,241.0" fill="#3c7ca7" stroke="#09131b" stroke-width="0.7" stroke-linejoin="round" /><polygon points="348.0,250.9 360.2,244.9 356.9,240.6 349.0,244.5" fill="#356f97" stroke="#09131b" stroke-width="0.7" stroke-linejoin="round" /><polygon points="344.9,241.0 349.0,244.5 356.9,240.6 352.7,237.1" fill="#61c2f9" stroke="#09131b" stroke-width="0.7" stroke-linejoin="round" /><polygon points="325.3,243.4 313.1,249.3 316.9,245.4 324.8,241.5" fill="#356f97" stroke="#09131b" stroke-width="0.5" stroke-linejoin="round" /><polygon points="313.1,249.3 319.4,255.0 320.6,248.7 316.9,245.4" fill="#3c7ca7" stroke="#09131b" stroke-width="0.7" stroke-linejoin="round" /><polygon points="319.4,255.0 331.8,249.0 328.6,244.7 320.6,248.7" fill="#356f97" stroke="#09131b" stroke-width="0.7" stroke-linejoin="round" /><polygon points="316.9,245.4 320.6,248.7 328.6,244.7 324.8,241.5" fill="#61c2f9" stroke="#09131b" stroke-width="0.7" stroke-linejoin="round" /><polygon points="360.5,245.2 348.3,251.3 352.2,247.1 360.1,243.2" fill="#356f97" stroke="#09131b" stroke-width="0.5" stroke-linejoin="round" /><polygon points="348.3,251.3 355.4,257.3 356.4,250.7 352.2,247.1" fill="#3c7ca7" stroke="#09131b" stroke-width="0.7" stroke-linejoin="round" /><polygon points="355.4,257.3 367.7,251.1 364.4,246.7 356.4,250.7" fill="#356f97" stroke="#09131b" stroke-width="0.7" stroke-linejoin="round" /><polygon points="352.2,247.1 356.4,250.7 364.4,246.7 360.1,243.2" fill="#61c2f9" stroke="#09131b" stroke-width="0.7" stroke-linejoin="round" /><polygon points="308.0,246.7 295.6,252.7 299.4,248.8 307.4,244.9" fill="#356f97" stroke="#09131b" stroke-width="0.5" stroke-linejoin="round" /><polygon points="295.6,252.7 301.8,258.4 303.0,252.1 299.4,248.8" fill="#3c7ca7" stroke="#09131b" stroke-width="0.7" stroke-linejoin="round" /><polygon points="301.8,258.4 314.2,252.3 311.1,248.2 303.0,252.1" fill="#356f97" stroke="#09131b" stroke-width="0.7" stroke-linejoin="round" /><polygon points="299.4,248.8 303.0,252.1 311.1,248.2 307.4,244.9" fill="#61c2f9" stroke="#09131b" stroke-width="0.7" stroke-linejoin="round" /><polygon points="332.1,249.3 319.7,255.4 323.6,251.3 331.6,247.4" fill="#356f97" stroke="#09131b" stroke-width="0.5" stroke-linejoin="round" /><polygon points="319.7,255.4 326.3,261.2 327.4,254.7 323.6,251.3" fill="#3c7ca7" stroke="#09131b" stroke-width="0.7" stroke-linejoin="round" /><polygon points="326.3,261.2 338.7,255.0 335.5,250.7 327.4,254.7" fill="#356f97" stroke="#09131b" stroke-width="0.7" stroke-linejoin="round" /><polygon points="323.6,251.3 327.4,254.7 335.5,250.7 331.6,247.4" fill="#61c2f9" stroke="#09131b" stroke-width="0.7" stroke-linejoin="round" /><polygon points="368.0,251.5 355.7,257.6 359.7,253.4 367.7,249.4" fill="#356f97" stroke="#09131b" stroke-width="0.5" stroke-linejoin="round" /><polygon points="355.7,257.6 363.0,263.8 364.0,257.0 359.7,253.4" fill="#3c7ca7" stroke="#09131b" stroke-width="0.7" stroke-linejoin="round" /><polygon points="363.0,263.8 375.5,257.5 372.1,253.0 364.0,257.0" fill="#356f97" stroke="#09131b" stroke-width="0.7" stroke-linejoin="round" /><polygon points="359.7,253.4 364.0,257.0 372.1,253.0 367.7,249.4" fill="#61c2f9" stroke="#09131b" stroke-width="0.7" stroke-linejoin="round" /><polygon points="314.5,252.7 302.1,258.7 305.9,254.8 314.0,250.8" fill="#356f97" stroke="#09131b" stroke-width="0.5" stroke-linejoin="round" /><polygon points="302.1,258.7 308.4,264.6 309.6,258.2 305.9,254.8" fill="#3c7ca7" stroke="#09131b" stroke-width="0.7" stroke-linejoin="round" /><polygon points="308.4,264.6 321.0,258.4 317.7,254.2 309.6,258.2" fill="#356f97" stroke="#09131b" stroke-width="0.7" stroke-linejoin="round" /><polygon points="305.9,254.8 309.6,258.2 317.7,254.2 314.0,250.8" fill="#61c2f9" stroke="#09131b" stroke-width="0.7" stroke-linejoin="round" /><polygon points="296.1,255.2 283.6,261.3 287.4,257.4 295.6,253.5" fill="#356f97" stroke="#09131b" stroke-width="0.5" stroke-linejoin="round" /><polygon points="283.6,261.3 289.6,267.1 290.8,260.7 287.4,257.4" fill="#3c7ca7" stroke="#09131b" stroke-width="0.7" stroke-linejoin="round" /><polygon points="289.6,267.1 302.2,260.9 299.0,256.7 290.8,260.7" fill="#356f97" stroke="#09131b" stroke-width="0.7" stroke-linejoin="round" /><polygon points="287.4,257.4 290.8,260.7 299.0,256.7 295.6,253.5" fill="#61c2f9" stroke="#09131b" stroke-width="0.7" stroke-linejoin="round" /><polygon points="339.0,255.4 326.5,261.6 330.5,257.4 338.6,253.4" fill="#356f97" stroke="#09131b" stroke-width="0.5" stroke-linejoin="round" /><polygon points="326.5,261.6 333.2,267.5 334.4,260.9 330.5,257.4" fill="#3c7ca7" stroke="#09131b" stroke-width="0.7" stroke-linejoin="round" /><polygon points="333.2,267.5 345.8,261.3 342.5,256.8 334.4,260.9" fill="#356f97" stroke="#09131b" stroke-width="0.7" stroke-linejoin="round" /><polygon points="330.5,257.4 334.4,260.9 342.5,256.8 338.6,253.4" fill="#61c2f9" stroke="#09131b" stroke-width="0.7" stroke-linejoin="round" /><polygon points="375.8,257.9 363.3,264.2 367.4,259.8 375.5,255.7" fill="#356f97" stroke="#09131b" stroke-width="0.5" stroke-linejoin="round" /><polygon points="363.3,264.2 370.9,270.5 371.9,263.5 367.4,259.8" fill="#3c7ca7" stroke="#09131b" stroke-width="0.7" stroke-linejoin="round" /><polygon points="370.9,270.5 383.4,264.1 380.0,259.4 371.9,263.5" fill="#356f97" stroke="#09131b" stroke-width="0.7" stroke-linejoin="round" /><polygon points="367.4,259.8 371.9,263.5 380.0,259.4 375.5,255.7" fill="#61c2f9" stroke="#09131b" stroke-width="0.7" stroke-linejoin="round" /><polygon points="321.2,258.8 308.7,265.0 312.6,260.9 320.7,256.9" fill="#356f97" stroke="#09131b" stroke-width="0.5" stroke-linejoin="round" /><polygon points="308.7,265.0 315.2,271.0 316.3,264.4 312.6,260.9" fill="#3c7ca7" stroke="#09131b" stroke-width="0.7" stroke-linejoin="round" /><polygon points="315.2,271.0 327.8,264.7 324.5,260.3 316.3,264.4" fill="#356f97" stroke="#09131b" stroke-width="0.7" stroke-linejoin="round" /><polygon points="312.6,260.9 316.3,264.4 324.5,260.3 320.7,256.9" fill="#61c2f9" stroke="#09131b" stroke-width="0.7" stroke-linejoin="round" /><polygon points="302.5,261.3 289.8,267.5 293.7,263.5 301.9,259.4" fill="#356f97" stroke="#09131b" stroke-width="0.5" stroke-linejoin="round" /><polygon points="289.8,267.5 296.0,273.4 297.2,266.8 293.7,263.5" fill="#3c7ca7" stroke="#09131b" stroke-width="0.7" stroke-linejoin="round" /><polygon points="296.0,273.4 308.7,267.1 305.5,262.8 297.2,266.8" fill="#356f97" stroke="#09131b" stroke-width="0.7" stroke-linejoin="round" /><polygon points="293.7,263.5 297.2,266.8 305.5,262.8 301.9,259.4" fill="#61c2f9" stroke="#09131b" stroke-width="0.7" stroke-linejoin="round" /><polygon points="346.1,261.6 333.5,267.9 337.5,263.7 345.7,259.6" fill="#356f97" stroke="#09131b" stroke-width="0.5" stroke-linejoin="round" /><polygon points="333.5,267.9 340.4,274.0 341.5,267.2 337.5,263.7" fill="#3c7ca7" stroke="#09131b" stroke-width="0.7" stroke-linejoin="round" /><polygon points="340.4,274.0 353.1,267.6 349.7,263.1 341.5,267.2" fill="#356f97" stroke="#09131b" stroke-width="0.7" stroke-linejoin="round" /><polygon points="337.5,263.7 341.5,267.2 349.7,263.1 345.7,259.6" fill="#61c2f9" stroke="#09131b" stroke-width="0.7" stroke-linejoin="round" /><polygon points="280.7,260.7 268.0,266.9 271.8,263.0 280.1,258.9" fill="#356f97" stroke="#09131b" stroke-width="0.5" stroke-linejoin="round" /><polygon points="268.0,266.9 278.3,277.2 279.6,270.7 271.8,263.0" fill="#3c7ca7" stroke="#09131b" stroke-width="0.7" stroke-linejoin="round" /><polygon points="278.3,277.2 291.2,270.8 287.9,266.6 279.6,270.7" fill="#356f97" stroke="#09131b" stroke-width="0.7" stroke-linejoin="round" /><polygon points="271.8,263.0 279.6,270.7 287.9,266.6 280.1,258.9" fill="#61c2f9" stroke="#09131b" stroke-width="0.7" stroke-linejoin="round" /><polygon points="383.7,264.5 371.2,270.9 375.3,266.4 383.4,262.2" fill="#356f97" stroke="#09131b" stroke-width="0.5" stroke-linejoin="round" /><polygon points="371.2,270.9 378.9,277.4 379.9,270.2 375.3,266.4" fill="#3c7ca7" stroke="#09131b" stroke-width="0.7" stroke-linejoin="round" /><polygon points="378.9,277.4 391.5,270.8 388.1,266.0 379.9,270.2" fill="#356f97" stroke="#09131b" stroke-width="0.7" stroke-linejoin="round" /><polygon points="375.3,266.4 379.9,270.2 388.1,266.0 383.4,262.2" fill="#61c2f9" stroke="#09131b" stroke-width="0.7" stroke-linejoin="round" /><polygon points="328.1,265.0 315.4,271.4 319.4,267.2 327.7,263.1" fill="#356f97" stroke="#09131b" stroke-width="0.5" stroke-linejoin="round" /><polygon points="315.4,271.4 322.1,277.5 323.3,270.7 319.4,267.2" fill="#3c7ca7" stroke="#09131b" stroke-width="0.7" stroke-linejoin="round" /><polygon points="322.1,277.5 334.9,271.1 331.5,266.6 323.3,270.7" fill="#356f97" stroke="#09131b" stroke-width="0.7" stroke-linejoin="round" /><polygon points="319.4,267.2 323.3,270.7 331.5,266.6 327.7,263.1" fill="#61c2f9" stroke="#09131b" stroke-width="0.7" stroke-linejoin="round" /><polygon points="309.0,267.4 296.2,273.7 300.2,269.7 308.5,265.5" fill="#356f97" stroke="#09131b" stroke-width="0.5" stroke-linejoin="round" /><polygon points="296.2,273.7 302.5,279.8 303.8,273.1 300.2,269.7" fill="#3c7ca7" stroke="#09131b" stroke-width="0.7" stroke-linejoin="round" /><polygon points="302.5,279.8 315.4,273.4 312.1,269.0 303.8,273.1" fill="#356f97" stroke="#09131b" stroke-width="0.7" stroke-linejoin="round" /><polygon points="300.2,269.7 303.8,273.1 312.1,269.0 308.5,265.5" fill="#61c2f9" stroke="#09131b" stroke-width="0.7" stroke-linejoin="round" /><polygon points="353.4,268.0 340.7,274.4 344.8,270.1 353.0,265.9" fill="#356f97" stroke="#09131b" stroke-width="0.5" stroke-linejoin="round" /><polygon points="340.7,274.4 347.8,280.7 348.8,273.7 344.8,270.1" fill="#3c7ca7" stroke="#09131b" stroke-width="0.7" stroke-linejoin="round" /><polygon points="347.8,280.7 360.5,274.2 357.1,269.5 348.8,273.7" fill="#356f97" stroke="#09131b" stroke-width="0.7" stroke-linejoin="round" /><polygon points="344.8,270.1 348.8,273.7 357.1,269.5 353.0,265.9" fill="#61c2f9" stroke="#09131b" stroke-width="0.7" stroke-linejoin="round" /><polygon points="291.2,271.0 278.3,277.3 282.2,273.3 290.6,269.2" fill="#356f97" stroke="#09131b" stroke-width="0.5" stroke-linejoin="round" /><polygon points="278.3,277.3 284.5,283.6 285.8,276.9 282.2,273.3" fill="#3c7ca7" stroke="#09131b" stroke-width="0.7" stroke-linejoin="round" /><polygon points="284.5,283.6 297.5,277.1 294.2,272.7 285.8,276.9" fill="#356f97" stroke="#09131b" stroke-width="0.7" stroke-linejoin="round" /><polygon points="282.2,273.3 285.8,276.9 294.2,272.7 290.6,269.2" fill="#61c2f9" stroke="#09131b" stroke-width="0.7" stroke-linejoin="round" /><polygon points="335.2,271.5 322.4,277.9 326.4,273.6 334.7,269.5" fill="#356f97" stroke="#09131b" stroke-width="0.5" stroke-linejoin="round" /><polygon points="322.4,277.9 329.2,284.2 330.4,277.3 326.4,273.6" fill="#3c7ca7" stroke="#09131b" stroke-width="0.7" stroke-linejoin="round" /><polygon points="329.2,284.2 342.1,277.7 338.7,273.1 330.4,277.3" fill="#356f97" stroke="#09131b" stroke-width="0.7" stroke-linejoin="round" /><polygon points="326.4,273.6 330.4,277.3 338.7,273.1 334.7,269.5" fill="#61c2f9" stroke="#09131b" stroke-width="0.7" stroke-linejoin="round" /><polygon points="315.7,273.7 302.8,280.2 306.8,276.0 315.2,271.8" fill="#356f97" stroke="#09131b" stroke-width="0.5" stroke-linejoin="round" /><polygon points="302.8,280.2 309.2,286.4 310.5,279.5 306.8,276.0" fill="#3c7ca7" stroke="#09131b" stroke-width="0.7" stroke-linejoin="round" /><polygon points="309.2,286.4 322.2,279.9 318.9,275.3 310.5,279.5" fill="#356f97" stroke="#09131b" stroke-width="0.7" stroke-linejoin="round" /><polygon points="306.8,276.0 310.5,279.5 318.9,275.3 315.2,271.8" fill="#61c2f9" stroke="#09131b" stroke-width="0.7" stroke-linejoin="round" /><polygon points="360.8,274.5 348.1,281.1 352.2,276.6 360.5,272.4" fill="#356f97" stroke="#09131b" stroke-width="0.5" stroke-linejoin="round" /><polygon points="348.1,281.1 355.3,287.5 356.4,280.3 352.2,276.6" fill="#3c7ca7" stroke="#09131b" stroke-width="0.7" stroke-linejoin="round" /><polygon points="355.3,287.5 368.2,280.9 364.7,276.0 356.4,280.3" fill="#356f97" stroke="#09131b" stroke-width="0.7" stroke-linejoin="round" /><polygon points="352.2,276.6 356.4,280.3 364.7,276.0 360.5,272.4" fill="#61c2f9" stroke="#09131b" stroke-width="0.7" stroke-linejoin="round" /><polygon points="398.0,276.3 385.3,282.9 389.5,278.3 397.8,274.0" fill="#356f97" stroke="#09131b" stroke-width="0.5" stroke-linejoin="round" /><polygon points="385.3,282.9 393.4,289.8 394.3,282.3 389.5,278.3" fill="#3c7ca7" stroke="#09131b" stroke-width="0.7" stroke-linejoin="round" /><polygon points="393.4,289.8 406.2,283.0 402.6,277.9 394.3,282.3" fill="#356f97" stroke="#09131b" stroke-width="0.7" stroke-linejoin="round" /><polygon points="389.5,278.3 394.3,282.3 402.6,277.9 397.8,274.0" fill="#61c2f9" stroke="#09131b" stroke-width="0.7" stroke-linejoin="round" /><polygon points="297.8,277.5 284.8,283.9 288.7,279.8 297.2,275.6" fill="#356f97" stroke="#09131b" stroke-width="0.5" stroke-linejoin="round" /><polygon points="284.8,283.9 291.1,290.3 292.4,283.5 288.7,279.8" fill="#3c7ca7" stroke="#09131b" stroke-width="0.7" stroke-linejoin="round" /><polygon points="291.1,290.3 304.2,283.8 300.9,279.3 292.4,283.5" fill="#356f97" stroke="#09131b" stroke-width="0.7" stroke-linejoin="round" /><polygon points="288.7,279.8 292.4,283.5 300.9,279.3 297.2,275.6" fill="#61c2f9" stroke="#09131b" stroke-width="0.7" stroke-linejoin="round" /><polygon points="342.4,278.1 329.5,284.6 333.6,280.3 342.0,276.0" fill="#356f97" stroke="#09131b" stroke-width="0.5" stroke-linejoin="round" /><polygon points="329.5,284.6 336.5,291.1 337.6,284.0 333.6,280.3" fill="#3c7ca7" stroke="#09131b" stroke-width="0.7" stroke-linejoin="round" /><polygon points="336.5,291.1 349.5,284.4 346.1,279.7 337.6,284.0" fill="#356f97" stroke="#09131b" stroke-width="0.7" stroke-linejoin="round" /><polygon points="333.6,280.3 337.6,284.0 346.1,279.7 342.0,276.0" fill="#61c2f9" stroke="#09131b" stroke-width="0.7" stroke-linejoin="round" /><polygon points="322.5,280.2 309.5,286.8 313.6,282.5 322.0,278.2" fill="#356f97" stroke="#09131b" stroke-width="0.5" stroke-linejoin="round" /><polygon points="309.5,286.8 316.1,293.2 317.4,286.1 313.6,282.5" fill="#3c7ca7" stroke="#09131b" stroke-width="0.7" stroke-linejoin="round" /><polygon points="316.1,293.2 329.2,286.5 325.8,281.8 317.4,286.1" fill="#356f97" stroke="#09131b" stroke-width="0.7" stroke-linejoin="round" /><polygon points="313.6,282.5 317.4,286.1 325.8,281.8 322.0,278.2" fill="#61c2f9" stroke="#09131b" stroke-width="0.7" stroke-linejoin="round" /><polygon points="368.5,281.2 355.6,287.9 359.8,283.4 368.2,279.0" fill="#356f97" stroke="#09131b" stroke-width="0.5" stroke-linejoin="round" /><polygon points="355.6,287.9 363.0,294.5 364.1,287.2 359.8,283.4" fill="#3c7ca7" stroke="#09131b" stroke-width="0.7" stroke-linejoin="round" /><polygon points="363.0,294.5 376.0,287.7 372.5,282.8 364.1,287.2" fill="#356f97" stroke="#09131b" stroke-width="0.7" stroke-linejoin="round" /><polygon points="359.8,283.4 364.1,287.2 372.5,282.8 368.2,279.0" fill="#61c2f9" stroke="#09131b" stroke-width="0.7" stroke-linejoin="round" /><polygon points="406.6,283.4 393.7,290.2 398.0,285.4 406.4,281.0" fill="#356f97" stroke="#09131b" stroke-width="0.5" stroke-linejoin="round" /><polygon points="393.7,290.2 402.1,297.2 403.0,289.5 398.0,285.4" fill="#3c7ca7" stroke="#09131b" stroke-width="0.7" stroke-linejoin="round" /><polygon points="402.1,297.2 415.0,290.3 411.4,285.1 403.0,289.5" fill="#356f97" stroke="#09131b" stroke-width="0.7" stroke-linejoin="round" /><polygon points="398.0,285.4 403.0,289.5 411.4,285.1 406.4,281.0" fill="#61c2f9" stroke="#09131b" stroke-width="0.7" stroke-linejoin="round" /><polygon points="304.5,284.1 291.4,290.7 295.4,286.5 304.0,282.2" fill="#356f97" stroke="#09131b" stroke-width="0.5" stroke-linejoin="round" /><polygon points="291.4,290.7 297.9,297.3 299.2,290.3 295.4,286.5" fill="#3c7ca7" stroke="#09131b" stroke-width="0.7" stroke-linejoin="round" /><polygon points="297.9,297.3 311.2,290.6 307.8,285.9 299.2,290.3" fill="#356f97" stroke="#09131b" stroke-width="0.7" stroke-linejoin="round" /><polygon points="295.4,286.5 299.2,290.3 307.8,285.9 304.0,282.2" fill="#61c2f9" stroke="#09131b" stroke-width="0.7" stroke-linejoin="round" /><polygon points="349.8,284.8 336.8,291.5 341.0,287.0 349.4,282.7" fill="#356f97" stroke="#09131b" stroke-width="0.5" stroke-linejoin="round" /><polygon points="336.8,291.5 344.0,298.2 345.1,290.9 341.0,287.0" fill="#3c7ca7" stroke="#09131b" stroke-width="0.7" stroke-linejoin="round" /><polygon points="344.0,298.2 357.1,291.4 353.6,286.5 345.1,290.9" fill="#356f97" stroke="#09131b" stroke-width="0.7" stroke-linejoin="round" /><polygon points="341.0,287.0 345.1,290.9 353.6,286.5 349.4,282.7" fill="#61c2f9" stroke="#09131b" stroke-width="0.7" stroke-linejoin="round" /><polygon points="329.5,286.9 316.4,293.5 320.5,289.2 329.1,284.8" fill="#356f97" stroke="#09131b" stroke-width="0.5" stroke-linejoin="round" /><polygon points="316.4,293.5 323.2,300.1 324.4,292.9 320.5,289.2" fill="#3c7ca7" stroke="#09131b" stroke-width="0.7" stroke-linejoin="round" /><polygon points="323.2,300.1 336.4,293.3 333.0,288.5 324.4,292.9" fill="#356f97" stroke="#09131b" stroke-width="0.7" stroke-linejoin="round" /><polygon points="320.5,289.2 324.4,292.9 333.0,288.5 329.1,284.8" fill="#61c2f9" stroke="#09131b" stroke-width="0.7" stroke-linejoin="round" /><polygon points="285.9,287.5 272.7,294.1 276.7,289.9 285.3,285.6" fill="#356f97" stroke="#09131b" stroke-width="0.5" stroke-linejoin="round" /><polygon points="272.7,294.1 279.0,300.7 280.3,293.7 276.7,289.9" fill="#3c7ca7" stroke="#09131b" stroke-width="0.7" stroke-linejoin="round" /><polygon points="279.0,300.7 292.3,293.9 289.0,289.4 280.3,293.7" fill="#356f97" stroke="#09131b" stroke-width="0.7" stroke-linejoin="round" /><polygon points="276.7,289.9 280.3,293.7 289.0,289.4 285.3,285.6" fill="#61c2f9" stroke="#09131b" stroke-width="0.7" stroke-linejoin="round" /><polygon points="376.4,288.1 363.3,294.9 367.6,290.3 376.0,285.9" fill="#356f97" stroke="#09131b" stroke-width="0.5" stroke-linejoin="round" /><polygon points="363.3,294.9 371.0,301.7 372.0,294.2 367.6,290.3" fill="#3c7ca7" stroke="#09131b" stroke-width="0.7" stroke-linejoin="round" /><polygon points="371.0,301.7 384.1,294.8 380.5,289.7 372.0,294.2" fill="#356f97" stroke="#09131b" stroke-width="0.7" stroke-linejoin="round" /><polygon points="367.6,290.3 372.0,294.2 380.5,289.7 376.0,285.9" fill="#61c2f9" stroke="#09131b" stroke-width="0.7" stroke-linejoin="round" /><polygon points="415.4,290.7 402.4,297.6 406.8,292.7 415.2,288.2" fill="#356f97" stroke="#09131b" stroke-width="0.5" stroke-linejoin="round" /><polygon points="402.4,297.6 411.0,304.8 411.9,297.0 406.8,292.7" fill="#3c7ca7" stroke="#09131b" stroke-width="0.7" stroke-linejoin="round" /><polygon points="411.0,304.8 424.1,297.8 420.3,292.4 411.9,297.0" fill="#356f97" stroke="#09131b" stroke-width="0.7" stroke-linejoin="round" /><polygon points="406.8,292.7 411.9,297.0 420.3,292.4 415.2,288.2" fill="#61c2f9" stroke="#09131b" stroke-width="0.7" stroke-linejoin="round" /><polygon points="311.4,291.0 298.2,297.7 302.3,293.4 310.9,289.0" fill="#356f97" stroke="#09131b" stroke-width="0.5" stroke-linejoin="round" /><polygon points="298.2,297.7 304.9,304.4 306.2,297.2 302.3,293.4" fill="#3c7ca7" stroke="#09131b" stroke-width="0.7" stroke-linejoin="round" /><polygon points="304.9,304.4 318.3,297.6 314.8,292.8 306.2,297.2" fill="#356f97" stroke="#09131b" stroke-width="0.7" stroke-linejoin="round" /><polygon points="302.3,293.4 306.2,297.2 314.8,292.8 310.9,289.0" fill="#61c2f9" stroke="#09131b" stroke-width="0.7" stroke-linejoin="round" /><polygon points="357.4,291.8 344.3,298.6 348.5,294.0 357.1,289.6" fill="#356f97" stroke="#09131b" stroke-width="0.5" stroke-linejoin="round" /><polygon points="344.3,298.6 351.7,305.4 352.8,297.9 348.5,294.0" fill="#3c7ca7" stroke="#09131b" stroke-width="0.7" stroke-linejoin="round" /><polygon points="351.7,305.4 364.9,298.5 361.4,293.4 352.8,297.9" fill="#356f97" stroke="#09131b" stroke-width="0.7" stroke-linejoin="round" /><polygon points="348.5,294.0 352.8,297.9 361.4,293.4 357.1,289.6" fill="#61c2f9" stroke="#09131b" stroke-width="0.7" stroke-linejoin="round" /><polygon points="336.7,293.7 323.5,300.5 327.7,296.0 336.3,291.6" fill="#356f97" stroke="#09131b" stroke-width="0.5" stroke-linejoin="round" /><polygon points="323.5,300.5 330.4,307.2 331.6,299.8 327.7,296.0" fill="#3c7ca7" stroke="#09131b" stroke-width="0.7" stroke-linejoin="round" /><polygon points="330.4,307.2 343.8,300.3 340.3,295.3 331.6,299.8" fill="#356f97" stroke="#09131b" stroke-width="0.7" stroke-linejoin="round" /><polygon points="327.7,296.0 331.6,299.8 340.3,295.3 336.3,291.6" fill="#61c2f9" stroke="#09131b" stroke-width="0.7" stroke-linejoin="round" /><polygon points="384.4,295.2 371.3,302.1 375.6,297.4 384.1,292.9" fill="#356f97" stroke="#09131b" stroke-width="0.5" stroke-linejoin="round" /><polygon points="371.3,302.1 379.1,309.1 380.1,301.4 375.6,297.4" fill="#3c7ca7" stroke="#09131b" stroke-width="0.7" stroke-linejoin="round" /><polygon points="379.1,309.1 392.4,302.1 388.7,296.8 380.1,301.4" fill="#356f97" stroke="#09131b" stroke-width="0.7" stroke-linejoin="round" /><polygon points="375.6,297.4 380.1,301.4 388.7,296.8 384.1,292.9" fill="#61c2f9" stroke="#09131b" stroke-width="0.7" stroke-linejoin="round" /><polygon points="318.5,298.0 305.2,304.8 309.3,300.4 318.0,295.9" fill="#356f97" stroke="#09131b" stroke-width="0.5" stroke-linejoin="round" /><polygon points="305.2,304.8 312.0,311.7 313.3,304.4 309.3,300.4" fill="#3c7ca7" stroke="#09131b" stroke-width="0.7" stroke-linejoin="round" /><polygon points="312.0,311.7 325.5,304.7 322.0,299.8 313.3,304.4" fill="#356f97" stroke="#09131b" stroke-width="0.7" stroke-linejoin="round" /><polygon points="309.3,300.4 313.3,304.4 322.0,299.8 318.0,295.9" fill="#61c2f9" stroke="#09131b" stroke-width="0.7" stroke-linejoin="round" /><polygon points="424.4,298.2 411.3,305.3 415.8,300.3 424.3,295.7" fill="#356f97" stroke="#09131b" stroke-width="0.5" stroke-linejoin="round" /><polygon points="411.3,305.3 420.2,312.7 421.0,304.6 415.8,300.3" fill="#3c7ca7" stroke="#09131b" stroke-width="0.7" stroke-linejoin="round" /><polygon points="420.2,312.7 433.4,305.5 429.6,300.0 421.0,304.6" fill="#356f97" stroke="#09131b" stroke-width="0.7" stroke-linejoin="round" /><polygon points="415.8,300.3 421.0,304.6 429.6,300.0 424.3,295.7" fill="#61c2f9" stroke="#09131b" stroke-width="0.7" stroke-linejoin="round" /><polygon points="365.2,298.9 352.0,305.8 356.3,301.1 364.9,296.6" fill="#356f97" stroke="#09131b" stroke-width="0.5" stroke-linejoin="round" /><polygon points="352.0,305.8 359.6,312.8 360.6,305.2 356.3,301.1" fill="#3c7ca7" stroke="#09131b" stroke-width="0.7" stroke-linejoin="round" /><polygon points="359.6,312.8 372.9,305.8 369.3,300.6 360.6,305.2" fill="#356f97" stroke="#09131b" stroke-width="0.7" stroke-linejoin="round" /><polygon points="356.3,301.1 360.6,305.2 369.3,300.6 364.9,296.6" fill="#61c2f9" stroke="#09131b" stroke-width="0.7" stroke-linejoin="round" /><polygon points="344.1,300.7 330.7,307.6 335.0,303.0 343.7,298.5" fill="#356f97" stroke="#09131b" stroke-width="0.5" stroke-linejoin="round" /><polygon points="330.7,307.6 337.9,314.5 339.1,306.9 335.0,303.0" fill="#3c7ca7" stroke="#09131b" stroke-width="0.7" stroke-linejoin="round" /><polygon points="337.9,314.5 351.4,307.4 347.8,302.4 339.1,306.9" fill="#356f97" stroke="#09131b" stroke-width="0.7" stroke-linejoin="round" /><polygon points="335.0,303.0 339.1,306.9 347.8,302.4 343.7,298.5" fill="#61c2f9" stroke="#09131b" stroke-width="0.7" stroke-linejoin="round" /><polygon points="392.7,302.5 379.4,309.5 383.8,304.7 392.4,300.1" fill="#356f97" stroke="#09131b" stroke-width="0.5" stroke-linejoin="round" /><polygon points="379.4,309.5 387.5,316.7 388.5,308.8 383.8,304.7" fill="#3c7ca7" stroke="#09131b" stroke-width="0.7" stroke-linejoin="round" /><polygon points="387.5,316.7 400.8,309.5 397.1,304.1 388.5,308.8" fill="#356f97" stroke="#09131b" stroke-width="0.7" stroke-linejoin="round" /><polygon points="383.8,304.7 388.5,308.8 397.1,304.1 392.4,300.1" fill="#61c2f9" stroke="#09131b" stroke-width="0.7" stroke-linejoin="round" /><polygon points="325.8,305.1 312.3,312.1 316.6,307.6 325.3,303.1" fill="#356f97" stroke="#09131b" stroke-width="0.5" stroke-linejoin="round" /><polygon points="312.3,312.1 319.4,319.2 320.6,311.7 316.6,307.6" fill="#3c7ca7" stroke="#09131b" stroke-width="0.7" stroke-linejoin="round" /><polygon points="319.4,319.2 333.0,312.1 329.5,307.1 320.6,311.7" fill="#356f97" stroke="#09131b" stroke-width="0.7" stroke-linejoin="round" /><polygon points="316.6,307.6 320.6,311.7 329.5,307.1 325.3,303.1" fill="#61c2f9" stroke="#09131b" stroke-width="0.7" stroke-linejoin="round" /><polygon points="433.7,305.9 420.5,313.1 425.0,308.0 433.6,303.3" fill="#356f97" stroke="#09131b" stroke-width="0.5" stroke-linejoin="round" /><polygon points="420.5,313.1 429.6,320.8 430.4,312.5 425.0,308.0" fill="#3c7ca7" stroke="#09131b" stroke-width="0.7" stroke-linejoin="round" /><polygon points="429.6,320.8 442.9,313.4 439.1,307.7 430.4,312.5" fill="#356f97" stroke="#09131b" stroke-width="0.7" stroke-linejoin="round" /><polygon points="425.0,308.0 430.4,312.5 439.1,307.7 433.6,303.3" fill="#61c2f9" stroke="#09131b" stroke-width="0.7" stroke-linejoin="round" /><polygon points="373.3,306.2 359.9,313.3 364.2,308.5 372.9,303.9" fill="#356f97" stroke="#09131b" stroke-width="0.5" stroke-linejoin="round" /><polygon points="359.9,313.3 367.7,320.5 368.7,312.6 364.2,308.5" fill="#3c7ca7" stroke="#09131b" stroke-width="0.7" stroke-linejoin="round" /><polygon points="367.7,320.5 381.2,313.3 377.5,307.9 368.7,312.6" fill="#356f97" stroke="#09131b" stroke-width="0.7" stroke-linejoin="round" /><polygon points="364.2,308.5 368.7,312.6 377.5,307.9 372.9,303.9" fill="#61c2f9" stroke="#09131b" stroke-width="0.7" stroke-linejoin="round" /><polygon points="351.7,307.8 338.2,314.9 342.5,310.2 351.3,305.6" fill="#356f97" stroke="#09131b" stroke-width="0.5" stroke-linejoin="round" /><polygon points="338.2,314.9 345.5,322.0 346.7,314.2 342.5,310.2" fill="#3c7ca7" stroke="#09131b" stroke-width="0.7" stroke-linejoin="round" /><polygon points="345.5,322.0 359.1,314.8 355.5,309.6 346.7,314.2" fill="#356f97" stroke="#09131b" stroke-width="0.7" stroke-linejoin="round" /><polygon points="342.5,310.2 346.7,314.2 355.5,309.6 351.3,305.6" fill="#61c2f9" stroke="#09131b" stroke-width="0.7" stroke-linejoin="round" /><polygon points="401.2,309.9 387.8,317.1 392.3,312.1 401.0,307.4" fill="#356f97" stroke="#09131b" stroke-width="0.5" stroke-linejoin="round" /><polygon points="387.8,317.1 396.1,324.5 397.0,316.4 392.3,312.1" fill="#3c7ca7" stroke="#09131b" stroke-width="0.7" stroke-linejoin="round" /><polygon points="396.1,324.5 409.6,317.2 405.8,311.6 397.0,316.4" fill="#356f97" stroke="#09131b" stroke-width="0.7" stroke-linejoin="round" /><polygon points="392.3,312.1 397.0,316.4 405.8,311.6 401.0,307.4" fill="#61c2f9" stroke="#09131b" stroke-width="0.7" stroke-linejoin="round" /><polygon points="333.3,312.5 319.7,319.6 324.0,315.0 332.8,310.4" fill="#356f97" stroke="#09131b" stroke-width="0.5" stroke-linejoin="round" /><polygon points="319.7,319.6 326.9,326.9 328.2,319.2 324.0,315.0" fill="#3c7ca7" stroke="#09131b" stroke-width="0.7" stroke-linejoin="round" /><polygon points="326.9,326.9 340.7,319.7 337.1,314.5 328.2,319.2" fill="#356f97" stroke="#09131b" stroke-width="0.7" stroke-linejoin="round" /><polygon points="324.0,315.0 328.2,319.2 337.1,314.5 332.8,310.4" fill="#61c2f9" stroke="#09131b" stroke-width="0.7" stroke-linejoin="round" /><polygon points="381.5,313.7 368.0,320.9 372.4,316.0 381.2,311.3" fill="#356f97" stroke="#09131b" stroke-width="0.5" stroke-linejoin="round" /><polygon points="368.0,320.9 376.0,328.3 377.0,320.3 372.4,316.0" fill="#3c7ca7" stroke="#09131b" stroke-width="0.7" stroke-linejoin="round" /><polygon points="376.0,328.3 389.6,321.0 385.9,315.5 377.0,320.3" fill="#356f97" stroke="#09131b" stroke-width="0.7" stroke-linejoin="round" /><polygon points="372.4,316.0 377.0,320.3 385.9,315.5 381.2,311.3" fill="#61c2f9" stroke="#09131b" stroke-width="0.7" stroke-linejoin="round" /><polygon points="359.4,315.2 345.8,322.4 350.2,317.6 359.1,312.9" fill="#356f97" stroke="#09131b" stroke-width="0.5" stroke-linejoin="round" /><polygon points="345.8,322.4 353.3,329.7 354.5,321.7 350.2,317.6" fill="#3c7ca7" stroke="#09131b" stroke-width="0.7" stroke-linejoin="round" /><polygon points="353.3,329.7 367.1,322.3 363.4,317.0 354.5,321.7" fill="#356f97" stroke="#09131b" stroke-width="0.7" stroke-linejoin="round" /><polygon points="350.2,317.6 354.5,321.7 363.4,317.0 359.1,312.9" fill="#61c2f9" stroke="#09131b" stroke-width="0.7" stroke-linejoin="round" /><polygon points="409.9,317.6 396.4,325.0 400.9,319.8 409.7,315.0" fill="#356f97" stroke="#09131b" stroke-width="0.5" stroke-linejoin="round" /><polygon points="396.4,325.0 404.9,332.5 405.9,324.2 400.9,319.8" fill="#3c7ca7" stroke="#09131b" stroke-width="0.7" stroke-linejoin="round" /><polygon points="404.9,332.5 418.5,325.0 414.7,319.3 405.9,324.2" fill="#356f97" stroke="#09131b" stroke-width="0.7" stroke-linejoin="round" /><polygon points="400.9,319.8 405.9,324.2 414.7,319.3 409.7,315.0" fill="#61c2f9" stroke="#09131b" stroke-width="0.7" stroke-linejoin="round" /><polygon points="293.0,295.1 279.6,301.9 283.7,297.2 292.4,292.8" fill="#356f97" stroke="#09131b" stroke-width="0.5" stroke-linejoin="round" /><polygon points="279.6,301.9 337.7,362.8 338.9,354.8 283.7,297.2" fill="#3c7ca7" stroke="#09131b" stroke-width="0.7" stroke-linejoin="round" /><polygon points="337.7,362.8 352.1,354.9 348.3,349.7 338.9,354.8" fill="#356f97" stroke="#09131b" stroke-width="0.7" stroke-linejoin="round" /><polygon points="283.7,297.2 338.9,354.8 348.3,349.7 292.4,292.8" fill="#61c2f9" stroke="#09131b" stroke-width="0.7" stroke-linejoin="round" /><polygon points="341.0,320.1 327.2,327.4 331.6,322.6 340.5,317.9" fill="#356f97" stroke="#09131b" stroke-width="0.5" stroke-linejoin="round" /><polygon points="327.2,327.4 334.7,334.9 335.9,326.9 331.6,322.6" fill="#3c7ca7" stroke="#09131b" stroke-width="0.7" stroke-linejoin="round" /><polygon points="334.7,334.9 348.6,327.4 344.9,322.1 335.9,326.9" fill="#356f97" stroke="#09131b" stroke-width="0.7" stroke-linejoin="round" /><polygon points="331.6,322.6 335.9,326.9 344.9,322.1 340.5,317.9" fill="#61c2f9" stroke="#09131b" stroke-width="0.7" stroke-linejoin="round" /><polygon points="390.0,321.4 376.3,328.8 380.8,323.8 389.7,318.9" fill="#356f97" stroke="#09131b" stroke-width="0.5" stroke-linejoin="round" /><polygon points="376.3,328.8 384.5,336.4 385.6,328.1 380.8,323.8" fill="#3c7ca7" stroke="#09131b" stroke-width="0.7" stroke-linejoin="round" /><polygon points="384.5,336.4 398.3,328.9 394.5,323.3 385.6,328.1" fill="#356f97" stroke="#09131b" stroke-width="0.7" stroke-linejoin="round" /><polygon points="380.8,323.8 385.6,328.1 394.5,323.3 389.7,318.9" fill="#61c2f9" stroke="#09131b" stroke-width="0.7" stroke-linejoin="round" /><polygon points="367.4,322.8 353.7,330.1 358.1,325.2 367.1,320.4" fill="#356f97" stroke="#09131b" stroke-width="0.5" stroke-linejoin="round" /><polygon points="353.7,330.1 361.4,337.6 362.5,329.4 358.1,325.2" fill="#3c7ca7" stroke="#09131b" stroke-width="0.7" stroke-linejoin="round" /><polygon points="361.4,337.6 375.3,330.1 371.5,324.6 362.5,329.4" fill="#356f97" stroke="#09131b" stroke-width="0.7" stroke-linejoin="round" /><polygon points="358.1,325.2 362.5,329.4 371.5,324.6 367.1,320.4" fill="#61c2f9" stroke="#09131b" stroke-width="0.7" stroke-linejoin="round" /><polygon points="418.9,325.5 405.3,333.0 409.9,327.7 418.7,322.8" fill="#356f97" stroke="#09131b" stroke-width="0.5" stroke-linejoin="round" /><polygon points="405.3,333.0 414.0,340.8 414.9,332.2 409.9,327.7" fill="#3c7ca7" stroke="#09131b" stroke-width="0.7" stroke-linejoin="round" /><polygon points="414.0,340.8 427.8,333.1 423.8,327.3 414.9,332.2" fill="#356f97" stroke="#09131b" stroke-width="0.7" stroke-linejoin="round" /><polygon points="409.9,327.7 414.9,332.2 423.8,327.3 418.7,322.8" fill="#61c2f9" stroke="#09131b" stroke-width="0.7" stroke-linejoin="round" /><polygon points="348.9,327.9 335.0,335.3 339.4,330.4 348.5,325.6" fill="#356f97" stroke="#09131b" stroke-width="0.5" stroke-linejoin="round" /><polygon points="335.0,335.3 342.6,343.0 343.8,334.9 339.4,330.4" fill="#3c7ca7" stroke="#09131b" stroke-width="0.7" stroke-linejoin="round" /><polygon points="342.6,343.0 356.7,335.4 352.9,330.0 343.8,334.9" fill="#356f97" stroke="#09131b" stroke-width="0.7" stroke-linejoin="round" /><polygon points="339.4,330.4 343.8,334.9 352.9,330.0 348.5,325.6" fill="#61c2f9" stroke="#09131b" stroke-width="0.7" stroke-linejoin="round" /><polygon points="398.7,329.3 384.9,336.9 389.5,331.7 398.4,326.8" fill="#356f97" stroke="#09131b" stroke-width="0.5" stroke-linejoin="round" /><polygon points="384.9,336.9 393.3,344.7 394.4,336.2 389.5,331.7" fill="#3c7ca7" stroke="#09131b" stroke-width="0.7" stroke-linejoin="round" /><polygon points="393.3,344.7 407.2,337.0 403.4,331.2 394.4,336.2" fill="#356f97" stroke="#09131b" stroke-width="0.7" stroke-linejoin="round" /><polygon points="389.5,331.7 394.4,336.2 403.4,331.2 398.4,326.8" fill="#61c2f9" stroke="#09131b" stroke-width="0.7" stroke-linejoin="round" /><polygon points="375.6,330.5 361.7,338.0 366.3,333.0 375.3,328.1" fill="#356f97" stroke="#09131b" stroke-width="0.5" stroke-linejoin="round" /><polygon points="361.7,338.0 369.7,345.7 370.8,337.3 366.3,333.0" fill="#3c7ca7" stroke="#09131b" stroke-width="0.7" stroke-linejoin="round" /><polygon points="369.7,345.7 383.7,338.0 379.9,332.4 370.8,337.3" fill="#356f97" stroke="#09131b" stroke-width="0.7" stroke-linejoin="round" /><polygon points="366.3,333.0 370.8,337.3 379.9,332.4 375.3,328.1" fill="#61c2f9" stroke="#09131b" stroke-width="0.7" stroke-linejoin="round" /><polygon points="428.1,333.6 414.4,341.3 419.0,335.9 428.0,330.9" fill="#356f97" stroke="#09131b" stroke-width="0.5" stroke-linejoin="round" /><polygon points="414.4,341.3 423.3,349.3 424.2,340.5 419.0,335.9" fill="#3c7ca7" stroke="#09131b" stroke-width="0.7" stroke-linejoin="round" /><polygon points="423.3,349.3 437.2,341.4 433.2,335.4 424.2,340.5" fill="#356f97" stroke="#09131b" stroke-width="0.7" stroke-linejoin="round" /><polygon points="419.0,335.9 424.2,340.5 433.2,335.4 428.0,330.9" fill="#61c2f9" stroke="#09131b" stroke-width="0.7" stroke-linejoin="round" /><polygon points="357.0,335.9 343.0,343.5 347.5,338.5 356.6,333.5" fill="#356f97" stroke="#09131b" stroke-width="0.5" stroke-linejoin="round" /><polygon points="343.0,343.5 350.8,351.4 352.0,343.0 347.5,338.5" fill="#3c7ca7" stroke="#09131b" stroke-width="0.7" stroke-linejoin="round" /><polygon points="350.8,351.4 365.0,343.6 361.2,338.0 352.0,343.0" fill="#356f97" stroke="#09131b" stroke-width="0.7" stroke-linejoin="round" /><polygon points="347.5,338.5 352.0,343.0 361.2,338.0 356.6,333.5" fill="#61c2f9" stroke="#09131b" stroke-width="0.7" stroke-linejoin="round" /><polygon points="384.0,338.5 370.0,346.2 374.6,341.0 383.7,336.0" fill="#356f97" stroke="#09131b" stroke-width="0.5" stroke-linejoin="round" /><polygon points="370.0,346.2 378.2,354.1 379.3,345.5 374.6,341.0" fill="#3c7ca7" stroke="#09131b" stroke-width="0.7" stroke-linejoin="round" /><polygon points="378.2,354.1 392.3,346.2 388.4,340.4 379.3,345.5" fill="#356f97" stroke="#09131b" stroke-width="0.7" stroke-linejoin="round" /><polygon points="374.6,341.0 379.3,345.5 388.4,340.4 383.7,336.0" fill="#61c2f9" stroke="#09131b" stroke-width="0.7" stroke-linejoin="round" /><polygon points="408.4,338.3 394.5,346.0 399.2,340.6 408.2,335.6" fill="#356f97" stroke="#09131b" stroke-width="0.5" stroke-linejoin="round" /><polygon points="394.5,346.0 408.9,359.4 409.9,350.5 399.2,340.6" fill="#3c7ca7" stroke="#09131b" stroke-width="0.7" stroke-linejoin="round" /><polygon points="408.9,359.4 423.0,351.4 419.0,345.3 409.9,350.5" fill="#356f97" stroke="#09131b" stroke-width="0.7" stroke-linejoin="round" /><polygon points="399.2,340.6 409.9,350.5 419.0,345.3 408.2,335.6" fill="#61c2f9" stroke="#09131b" stroke-width="0.7" stroke-linejoin="round" /><polygon points="365.3,344.1 351.2,351.9 355.7,346.7 365.0,341.7" fill="#356f97" stroke="#09131b" stroke-width="0.5" stroke-linejoin="round" /><polygon points="351.2,351.9 359.3,360.0 360.4,351.4 355.7,346.7" fill="#3c7ca7" stroke="#09131b" stroke-width="0.7" stroke-linejoin="round" /><polygon points="359.3,360.0 373.6,352.1 369.7,346.3 360.4,351.4" fill="#356f97" stroke="#09131b" stroke-width="0.7" stroke-linejoin="round" /><polygon points="355.7,346.7 360.4,351.4 369.7,346.3 365.0,341.7" fill="#61c2f9" stroke="#09131b" stroke-width="0.7" stroke-linejoin="round" /><polygon points="392.7,346.7 378.5,354.6 383.2,349.2 392.4,344.1" fill="#356f97" stroke="#09131b" stroke-width="0.5" stroke-linejoin="round" /><polygon points="378.5,354.6 386.9,362.7 388.0,353.8 383.2,349.2" fill="#3c7ca7" stroke="#09131b" stroke-width="0.7" stroke-linejoin="round" /><polygon points="386.9,362.7 401.2,354.7 397.2,348.7 388.0,353.8" fill="#356f97" stroke="#09131b" stroke-width="0.7" stroke-linejoin="round" /><polygon points="383.2,349.2 388.0,353.8 397.2,348.7 392.4,344.1" fill="#61c2f9" stroke="#09131b" stroke-width="0.7" stroke-linejoin="round" /><polygon points="471.3,347.8 457.4,355.9 462.3,350.0 471.4,344.8" fill="#356f97" stroke="#09131b" stroke-width="0.5" stroke-linejoin="round" /><polygon points="457.4,355.9 467.3,364.3 468.1,354.9 462.3,350.0" fill="#3c7ca7" stroke="#09131b" stroke-width="0.7" stroke-linejoin="round" /><polygon points="467.3,364.3 481.3,356.1 477.1,349.6 468.1,354.9" fill="#356f97" stroke="#09131b" stroke-width="0.7" stroke-linejoin="round" /><polygon points="462.3,350.0 468.1,354.9 477.1,349.6 471.4,344.8" fill="#61c2f9" stroke="#09131b" stroke-width="0.7" stroke-linejoin="round" /><polygon points="481.8,356.7 467.8,364.9 472.8,358.9 481.9,353.6" fill="#356f97" stroke="#09131b" stroke-width="0.5" stroke-linejoin="round" /><polygon points="467.8,364.9 478.0,373.7 478.7,363.9 472.8,358.9" fill="#3c7ca7" stroke="#09131b" stroke-width="0.7" stroke-linejoin="round" /><polygon points="478.0,373.7 492.1,365.3 487.8,358.5 478.7,363.9" fill="#356f97" stroke="#09131b" stroke-width="0.7" stroke-linejoin="round" /><polygon points="472.8,358.9 478.7,363.9 487.8,358.5 481.9,353.6" fill="#61c2f9" stroke="#09131b" stroke-width="0.7" stroke-linejoin="round" /><polygon points="455.8,356.8 441.7,365.0 446.6,359.2 455.8,353.9" fill="#356f97" stroke="#09131b" stroke-width="0.5" stroke-linejoin="round" /><polygon points="441.7,365.0 451.4,373.7 452.2,364.2 446.6,359.2" fill="#3c7ca7" stroke="#09131b" stroke-width="0.7" stroke-linejoin="round" /><polygon points="451.4,373.7 465.7,365.3 461.5,358.8 452.2,364.2" fill="#356f97" stroke="#09131b" stroke-width="0.7" stroke-linejoin="round" /><polygon points="446.6,359.2 452.2,364.2 461.5,358.8 455.8,353.9" fill="#61c2f9" stroke="#09131b" stroke-width="0.7" stroke-linejoin="round" /><polygon points="374.4,353.2 360.1,361.1 364.8,355.7 374.1,350.6" fill="#356f97" stroke="#09131b" stroke-width="0.5" stroke-linejoin="round" /><polygon points="360.1,361.1 377.0,378.1 378.1,369.1 364.8,355.7" fill="#3c7ca7" stroke="#09131b" stroke-width="0.7" stroke-linejoin="round" /><polygon points="377.0,378.1 391.6,369.8 387.6,363.7 378.1,369.1" fill="#356f97" stroke="#09131b" stroke-width="0.7" stroke-linejoin="round" /><polygon points="364.8,355.7 378.1,369.1 387.6,363.7 374.1,350.6" fill="#61c2f9" stroke="#09131b" stroke-width="0.7" stroke-linejoin="round" /><polygon points="492.6,365.9 478.5,374.3 483.5,368.1 492.7,362.6" fill="#356f97" stroke="#09131b" stroke-width="0.5" stroke-linejoin="round" /><polygon points="478.5,374.3 489.0,383.3 489.6,373.3 483.5,368.1" fill="#3c7ca7" stroke="#09131b" stroke-width="0.7" stroke-linejoin="round" /><polygon points="489.0,383.3 503.2,374.7 498.9,367.7 489.6,373.3" fill="#356f97" stroke="#09131b" stroke-width="0.7" stroke-linejoin="round" /><polygon points="483.5,368.1 489.6,373.3 498.9,367.7 492.7,362.6" fill="#61c2f9" stroke="#09131b" stroke-width="0.7" stroke-linejoin="round" /><polygon points="466.1,365.9 451.9,374.3 456.9,368.3 466.2,362.8" fill="#356f97" stroke="#09131b" stroke-width="0.5" stroke-linejoin="round" /><polygon points="451.9,374.3 461.9,383.2 462.7,373.4 456.9,368.3" fill="#3c7ca7" stroke="#09131b" stroke-width="0.7" stroke-linejoin="round" /><polygon points="461.9,383.2 476.3,374.7 472.0,367.9 462.7,373.4" fill="#356f97" stroke="#09131b" stroke-width="0.7" stroke-linejoin="round" /><polygon points="456.9,368.3 462.7,373.4 472.0,367.9 466.2,362.8" fill="#61c2f9" stroke="#09131b" stroke-width="0.7" stroke-linejoin="round" /><polygon points="440.0,366.0 425.7,374.3 430.6,368.4 439.9,363.0" fill="#356f97" stroke="#09131b" stroke-width="0.5" stroke-linejoin="round" /><polygon points="425.7,374.3 435.3,383.1 436.2,373.5 430.6,368.4" fill="#3c7ca7" stroke="#09131b" stroke-width="0.7" stroke-linejoin="round" /><polygon points="435.3,383.1 449.8,374.7 445.5,368.1 436.2,373.5" fill="#356f97" stroke="#09131b" stroke-width="0.7" stroke-linejoin="round" /><polygon points="430.6,368.4 436.2,373.5 445.5,368.1 439.9,363.0" fill="#61c2f9" stroke="#09131b" stroke-width="0.7" stroke-linejoin="round" /><polygon points="503.7,375.3 489.5,383.9 494.6,377.5 503.9,371.9" fill="#356f97" stroke="#09131b" stroke-width="0.5" stroke-linejoin="round" /><polygon points="489.5,383.9 500.3,393.1 500.9,382.9 494.6,377.5" fill="#3c7ca7" stroke="#09131b" stroke-width="0.7" stroke-linejoin="round" /><polygon points="500.3,393.1 514.7,384.3 510.2,377.2 500.9,382.9" fill="#356f97" stroke="#09131b" stroke-width="0.7" stroke-linejoin="round" /><polygon points="494.6,377.5 500.9,382.9 510.2,377.2 503.9,371.9" fill="#61c2f9" stroke="#09131b" stroke-width="0.7" stroke-linejoin="round" /><polygon points="476.8,375.3 462.4,383.8 467.5,377.6 476.9,372.1" fill="#356f97" stroke="#09131b" stroke-width="0.5" stroke-linejoin="round" /><polygon points="462.4,383.8 472.8,393.0 473.5,382.9 467.5,377.6" fill="#3c7ca7" stroke="#09131b" stroke-width="0.7" stroke-linejoin="round" /><polygon points="472.8,393.0 487.3,384.3 482.9,377.3 473.5,382.9" fill="#356f97" stroke="#09131b" stroke-width="0.7" stroke-linejoin="round" /><polygon points="467.5,377.6 473.5,382.9 482.9,377.3 476.9,372.1" fill="#61c2f9" stroke="#09131b" stroke-width="0.7" stroke-linejoin="round" /><polygon points="450.2,375.3 435.7,383.8 440.7,377.8 450.2,372.2" fill="#356f97" stroke="#09131b" stroke-width="0.5" stroke-linejoin="round" /><polygon points="435.7,383.8 445.6,392.9 446.5,383.0 440.7,377.8" fill="#3c7ca7" stroke="#09131b" stroke-width="0.7" stroke-linejoin="round" /><polygon points="445.6,392.9 460.2,384.2 455.9,377.4 446.5,383.0" fill="#356f97" stroke="#09131b" stroke-width="0.7" stroke-linejoin="round" /><polygon points="440.7,377.8 446.5,383.0 455.9,377.4 450.2,372.2" fill="#61c2f9" stroke="#09131b" stroke-width="0.7" stroke-linejoin="round" /><polygon points="424.0,375.3 409.4,383.7 414.3,377.9 423.8,372.4" fill="#356f97" stroke="#09131b" stroke-width="0.5" stroke-linejoin="round" /><polygon points="409.4,383.7 418.8,392.8 419.8,383.1 414.3,377.9" fill="#3c7ca7" stroke="#09131b" stroke-width="0.7" stroke-linejoin="round" /><polygon points="418.8,392.8 433.6,384.2 429.3,377.5 419.8,383.1" fill="#356f97" stroke="#09131b" stroke-width="0.7" stroke-linejoin="round" /><polygon points="414.3,377.9 419.8,383.1 429.3,377.5 423.8,372.4" fill="#61c2f9" stroke="#09131b" stroke-width="0.7" stroke-linejoin="round" /><polygon points="487.8,384.9 473.2,393.7 478.4,387.3 487.9,381.6" fill="#356f97" stroke="#09131b" stroke-width="0.5" stroke-linejoin="round" /><polygon points="473.2,393.7 483.9,403.2 484.6,392.8 478.4,387.3" fill="#3c7ca7" stroke="#09131b" stroke-width="0.7" stroke-linejoin="round" /><polygon points="483.9,403.2 498.6,394.2 494.1,387.0 484.6,392.8" fill="#356f97" stroke="#09131b" stroke-width="0.7" stroke-linejoin="round" /><polygon points="478.4,387.3 484.6,392.8 494.1,387.0 487.9,381.6" fill="#61c2f9" stroke="#09131b" stroke-width="0.7" stroke-linejoin="round" /><polygon points="460.7,384.8 446.1,393.5 451.2,387.4 460.7,381.7" fill="#356f97" stroke="#09131b" stroke-width="0.5" stroke-linejoin="round" /><polygon points="446.1,393.5 456.3,403.0 457.1,392.8 451.2,387.4" fill="#3c7ca7" stroke="#09131b" stroke-width="0.7" stroke-linejoin="round" /><polygon points="456.3,403.0 471.0,394.1 466.7,387.0 457.1,392.8" fill="#356f97" stroke="#09131b" stroke-width="0.7" stroke-linejoin="round" /><polygon points="451.2,387.4 457.1,392.8 466.7,387.0 460.7,381.7" fill="#61c2f9" stroke="#09131b" stroke-width="0.7" stroke-linejoin="round" /><polygon points="434.0,384.8 419.3,393.4 424.3,387.4 433.9,381.8" fill="#356f97" stroke="#09131b" stroke-width="0.5" stroke-linejoin="round" /><polygon points="419.3,393.4 429.0,402.8 429.9,392.8 424.3,387.4" fill="#3c7ca7" stroke="#09131b" stroke-width="0.7" stroke-linejoin="round" /><polygon points="429.0,402.8 443.9,393.9 439.6,387.1 429.9,392.8" fill="#356f97" stroke="#09131b" stroke-width="0.7" stroke-linejoin="round" /><polygon points="424.3,387.4 429.9,392.8 439.6,387.1 433.9,381.8" fill="#61c2f9" stroke="#09131b" stroke-width="0.7" stroke-linejoin="round" /><polygon points="407.7,384.7 392.8,393.3 397.8,387.5 407.4,381.9" fill="#356f97" stroke="#09131b" stroke-width="0.5" stroke-linejoin="round" /><polygon points="392.8,393.3 402.1,402.6 403.2,392.8 397.8,387.5" fill="#3c7ca7" stroke="#09131b" stroke-width="0.7" stroke-linejoin="round" /><polygon points="402.1,402.6 417.1,393.8 412.9,387.2 403.2,392.8" fill="#356f97" stroke="#09131b" stroke-width="0.7" stroke-linejoin="round" /><polygon points="397.8,387.5 403.2,392.8 412.9,387.2 407.4,381.9" fill="#61c2f9" stroke="#09131b" stroke-width="0.7" stroke-linejoin="round" /><polygon points="515.5,385.2 501.1,394.0 506.3,387.5 515.7,381.7" fill="#356f97" stroke="#09131b" stroke-width="0.5" stroke-linejoin="round" /><polygon points="501.1,394.0 512.2,403.6 512.8,393.0 506.3,387.5" fill="#3c7ca7" stroke="#09131b" stroke-width="0.7" stroke-linejoin="round" /><polygon points="512.2,403.6 526.8,394.6 522.2,387.2 512.8,393.0" fill="#356f97" stroke="#09131b" stroke-width="0.7" stroke-linejoin="round" /><polygon points="506.3,387.5 512.8,393.0 522.2,387.2 515.7,381.7" fill="#61c2f9" stroke="#09131b" stroke-width="0.7" stroke-linejoin="round" /><polygon points="381.4,385.7 366.4,394.2 371.3,388.5 381.0,382.9" fill="#356f97" stroke="#09131b" stroke-width="0.5" stroke-linejoin="round" /><polygon points="366.4,394.2 384.5,413.3 385.7,403.5 371.3,388.5" fill="#3c7ca7" stroke="#09131b" stroke-width="0.7" stroke-linejoin="round" /><polygon points="384.5,413.3 399.8,404.3 395.6,397.7 385.7,403.5" fill="#356f97" stroke="#09131b" stroke-width="0.7" stroke-linejoin="round" /><polygon points="371.3,388.5 385.7,403.5 395.6,397.7 381.0,382.9" fill="#61c2f9" stroke="#09131b" stroke-width="0.7" stroke-linejoin="round" /><polygon points="417.5,394.4 402.5,403.2 407.6,397.2 417.3,391.5" fill="#356f97" stroke="#09131b" stroke-width="0.5" stroke-linejoin="round" /><polygon points="402.5,403.2 412.1,412.8 413.1,402.8 407.6,397.2" fill="#3c7ca7" stroke="#09131b" stroke-width="0.7" stroke-linejoin="round" /><polygon points="412.1,412.8 427.2,403.8 422.9,397.0 413.1,402.8" fill="#356f97" stroke="#09131b" stroke-width="0.7" stroke-linejoin="round" /><polygon points="407.6,397.2 413.1,402.8 422.9,397.0 417.3,391.5" fill="#61c2f9" stroke="#09131b" stroke-width="0.7" stroke-linejoin="round" /><polygon points="444.4,394.6 429.5,403.4 434.6,397.3 444.3,391.5" fill="#356f97" stroke="#09131b" stroke-width="0.5" stroke-linejoin="round" /><polygon points="429.5,403.4 439.5,413.1 440.4,402.8 434.6,397.3" fill="#3c7ca7" stroke="#09131b" stroke-width="0.7" stroke-linejoin="round" /><polygon points="439.5,413.1 454.5,404.0 450.1,397.0 440.4,402.8" fill="#356f97" stroke="#09131b" stroke-width="0.7" stroke-linejoin="round" /><polygon points="434.6,397.3 440.4,402.8 450.1,397.0 444.3,391.5" fill="#61c2f9" stroke="#09131b" stroke-width="0.7" stroke-linejoin="round" /><polygon points="471.5,394.7 456.8,403.6 462.0,397.3 471.6,391.5" fill="#356f97" stroke="#09131b" stroke-width="0.5" stroke-linejoin="round" /><polygon points="456.8,403.6 467.3,413.4 468.1,402.9 462.0,397.3" fill="#3c7ca7" stroke="#09131b" stroke-width="0.7" stroke-linejoin="round" /><polygon points="467.3,413.4 482.2,404.2 477.7,397.0 468.1,402.9" fill="#356f97" stroke="#09131b" stroke-width="0.7" stroke-linejoin="round" /><polygon points="462.0,397.3 468.1,402.9 477.7,397.0 471.6,391.5" fill="#61c2f9" stroke="#09131b" stroke-width="0.7" stroke-linejoin="round" /><polygon points="427.7,404.5 412.6,413.5 417.7,407.3 427.6,401.5" fill="#356f97" stroke="#09131b" stroke-width="0.5" stroke-linejoin="round" /><polygon points="412.6,413.5 422.4,423.4 423.4,413.0 417.7,407.3" fill="#3c7ca7" stroke="#09131b" stroke-width="0.7" stroke-linejoin="round" /><polygon points="422.4,423.4 437.7,414.2 433.3,407.1 423.4,413.0" fill="#356f97" stroke="#09131b" stroke-width="0.7" stroke-linejoin="round" /><polygon points="417.7,407.3 423.4,413.0 433.3,407.1 427.6,401.5" fill="#61c2f9" stroke="#09131b" stroke-width="0.7" stroke-linejoin="round" /><polygon points="455.0,404.7 440.0,413.8 445.2,407.4 455.0,401.5" fill="#356f97" stroke="#09131b" stroke-width="0.5" stroke-linejoin="round" /><polygon points="440.0,413.8 450.3,423.7 451.2,413.1 445.2,407.4" fill="#3c7ca7" stroke="#09131b" stroke-width="0.7" stroke-linejoin="round" /><polygon points="450.3,423.7 465.5,414.5 461.0,407.1 451.2,413.1" fill="#356f97" stroke="#09131b" stroke-width="0.7" stroke-linejoin="round" /><polygon points="445.2,407.4 451.2,413.1 461.0,407.1 455.0,401.5" fill="#61c2f9" stroke="#09131b" stroke-width="0.7" stroke-linejoin="round" /><polygon points="483.0,405.1 468.0,414.3 473.3,407.7 483.0,401.8" fill="#356f97" stroke="#09131b" stroke-width="0.5" stroke-linejoin="round" /><polygon points="468.0,414.3 478.9,424.3 479.6,413.5 473.3,407.7" fill="#3c7ca7" stroke="#09131b" stroke-width="0.7" stroke-linejoin="round" /><polygon points="478.9,424.3 494.0,415.0 489.4,407.5 479.6,413.5" fill="#356f97" stroke="#09131b" stroke-width="0.7" stroke-linejoin="round" /><polygon points="473.3,407.7 479.6,413.5 489.4,407.5 483.0,401.8" fill="#61c2f9" stroke="#09131b" stroke-width="0.7" stroke-linejoin="round" /><polygon points="400.9,405.7 385.6,414.7 390.7,408.7 400.6,402.8" fill="#356f97" stroke="#09131b" stroke-width="0.5" stroke-linejoin="round" /><polygon points="385.6,414.7 395.0,424.5 396.1,414.3 390.7,408.7" fill="#3c7ca7" stroke="#09131b" stroke-width="0.7" stroke-linejoin="round" /><polygon points="395.0,424.5 410.4,415.4 406.1,408.4 396.1,414.3" fill="#356f97" stroke="#09131b" stroke-width="0.7" stroke-linejoin="round" /><polygon points="390.7,408.7 396.1,414.3 406.1,408.4 400.6,402.8" fill="#61c2f9" stroke="#09131b" stroke-width="0.7" stroke-linejoin="round" /><polygon points="438.2,414.8 422.9,424.1 428.1,417.7 438.1,411.7" fill="#356f97" stroke="#09131b" stroke-width="0.5" stroke-linejoin="round" /><polygon points="422.9,424.1 433.1,434.3 434.0,423.6 428.1,417.7" fill="#3c7ca7" stroke="#09131b" stroke-width="0.7" stroke-linejoin="round" /><polygon points="433.1,434.3 448.5,424.9 444.0,417.5 434.0,423.6" fill="#356f97" stroke="#09131b" stroke-width="0.7" stroke-linejoin="round" /><polygon points="428.1,417.7 434.0,423.6 444.0,417.5 438.1,411.7" fill="#61c2f9" stroke="#09131b" stroke-width="0.7" stroke-linejoin="round" /><polygon points="410.9,416.0 395.4,425.2 400.6,419.0 410.7,413.0" fill="#356f97" stroke="#09131b" stroke-width="0.5" stroke-linejoin="round" /><polygon points="395.4,425.2 405.2,435.4 406.2,424.9 400.6,419.0" fill="#3c7ca7" stroke="#09131b" stroke-width="0.7" stroke-linejoin="round" /><polygon points="405.2,435.4 420.8,426.0 416.3,418.8 406.2,424.9" fill="#356f97" stroke="#09131b" stroke-width="0.7" stroke-linejoin="round" /><polygon points="400.6,419.0 406.2,424.9 416.3,418.8 410.7,413.0" fill="#61c2f9" stroke="#09131b" stroke-width="0.7" stroke-linejoin="round" /><polygon points="421.2,426.7 405.6,436.1 410.9,429.7 421.0,423.6" fill="#356f97" stroke="#09131b" stroke-width="0.5" stroke-linejoin="round" /><polygon points="405.6,436.1 415.6,446.6 416.7,435.8 410.9,429.7" fill="#3c7ca7" stroke="#09131b" stroke-width="0.7" stroke-linejoin="round" /><polygon points="415.6,446.6 431.4,437.0 426.9,429.5 416.7,435.8" fill="#356f97" stroke="#09131b" stroke-width="0.7" stroke-linejoin="round" /><polygon points="410.9,429.7 416.7,435.8 426.9,429.5 421.0,423.6" fill="#61c2f9" stroke="#09131b" stroke-width="0.7" stroke-linejoin="round" /><polygon points="450.6,425.0 415.4,446.5 420.8,440.0 450.5,421.7" fill="#356f97" stroke="#09131b" stroke-width="0.5" stroke-linejoin="round" /><polygon points="415.4,446.5 425.7,457.4 426.7,446.2 420.8,440.0" fill="#3c7ca7" stroke="#09131b" stroke-width="0.7" stroke-linejoin="round" /><polygon points="425.7,457.4 461.3,435.3 456.7,427.7 426.7,446.2" fill="#356f97" stroke="#09131b" stroke-width="0.7" stroke-linejoin="round" /><polygon points="420.8,440.0 426.7,446.2 456.7,427.7 450.5,421.7" fill="#61c2f9" stroke="#09131b" stroke-width="0.7" stroke-linejoin="round" />
</g>
</svg>
<div class="abs" id="blk"></div>
<div class="abs" id="rstrip"></div>
<div class="abs" id="title"><span>FP-1000</span></div>
<div class="abs" id="tb"></div>
<div class="abs" id="logo"><i style="position:absolute;left:0;top:0;width:22.5px;height:22.5px;border-radius:4px;overflow:hidden;display:block"><i style="position:absolute;left:9px;top:4px;width:22px;height:26px;background:#6f9bb5;transform:rotate(28deg);transform-origin:0 100%;display:block;opacity:.75"></i></i></div>
<div class="abs" id="brand1">AUTODESK<span style="font-size:5px;vertical-align:top">®</span></div>
<div class="abs" id="brand2">123D<span style="font-size:5px;vertical-align:top">°</span> DESIGN</div>
<div class="abs btn" id="prem"><b>プレミアム版登録</b><s>(商業利用向け)</s></div>
<div class="abs btn" id="sign"><span>サインイン</span></div>
<div class="abs" id="help">?</div>
<div class="abs" id="scroll"></div>
<div class="abs" id="scrollb"></div>
<div class="abs" id="nav"></div>
<div class="abs" id="gridhdr"><span>グリッドを編集</span></div>
<div class="abs inp" style="left:925px">1</div>
<div class="abs inp" style="left:967.4px">1</div>
<div class="abs snl" style="left:920px"><span>長さスナップ</span></div>
<div class="abs snl" style="left:962px"><span>角度スナップ</span></div>
<div class="abs" id="bot"><i style="left:26px;width:182px;background:#efefef"></i><i style="left:495px;width:25px;background:#3a3a3a"></i><span style="position:absolute;left:966px;top:1.6px;font-size:7px;line-height:7px;color:#fff;">17:42</span></div>
<svg class="abs" id="icons" style="left:0;top:0" width="1024" height="560" viewBox="0 0 1024 560">
<defs><filter id="vcs"><feGaussianBlur stdDeviation="2"/></filter></defs><g transform="translate(332.3 30.6) scale(1 1)" fill="#111"><path d="M-5.6 -0.6L-1.4 -3.6L-1.4 -1.7C2.2 -1.8 4.6 -0.2 5.6 2.7C3.6 0.9 1.4 0.4 -1.4 0.5L-1.4 2.4Z"/></g>
<g transform="translate(354.5 30.6) scale(-1 1)" fill="#b9b9b9"><path d="M-5.6 -0.6L-1.4 -3.6L-1.4 -1.7C2.2 -1.8 4.6 -0.2 5.6 2.7C3.6 0.9 1.4 0.4 -1.4 0.5L-1.4 2.4Z"/></g>
<line x1="377.4" y1="25.3" x2="377.4" y2="37.3" stroke="#c4c4c4" stroke-width="0.8"/>
<line x1="423.0" y1="25.3" x2="423.0" y2="37.3" stroke="#c4c4c4" stroke-width="0.8"/>
<line x1="674.2" y1="25.3" x2="674.2" y2="37.3" stroke="#c4c4c4" stroke-width="0.8"/>
<rect x="395.2" y="26.3" width="11.6" height="10.6" fill="#f4f4f4" stroke="#9c9c9c" stroke-width="0.7"/>
<polygon points="396.80,30.40 400.20,32.10 400.20,36.10 396.80,34.40" fill="#2e2e2e" stroke="#1c1c1c" stroke-width="0.5" stroke-linejoin="round" /><polygon points="403.60,30.40 400.20,32.10 400.20,36.10 403.60,34.40" fill="#5a5a5a" stroke="#1c1c1c" stroke-width="0.5" stroke-linejoin="round" /><polygon points="400.20,28.70 403.60,30.40 400.20,32.10 396.80,30.40" fill="#fff" stroke="#1c1c1c" stroke-width="0.5" stroke-linejoin="round" />
<rect x="401.6" y="23.8" width="6.2" height="5.6" fill="#efefef"/><path d="M402 26.8H407.4M404.7 24.1V29.5" stroke="#222" stroke-width="0.9" fill="none"/>
<path d="M410.3 43.6l1.3 -1.3" stroke="#9a9a9a" stroke-width="0.7" fill="none"/>
<circle cx="448.3" cy="28.9" r="4.1" fill="none" stroke="#222" stroke-width="0.7"/>
<polygon points="440.00,29.70 444.40,31.90 444.40,36.90 440.00,34.70" fill="#2e2e2e" stroke="#1c1c1c" stroke-width="0.5" stroke-linejoin="round" /><polygon points="448.80,29.70 444.40,31.90 444.40,36.90 448.80,34.70" fill="#5a5a5a" stroke="#1c1c1c" stroke-width="0.5" stroke-linejoin="round" /><polygon points="444.40,27.50 448.80,29.70 444.40,31.90 440.00,29.70" fill="#fff" stroke="#1c1c1c" stroke-width="0.5" stroke-linejoin="round" />
<path d="M455.9 43.6l1.3 -1.3" stroke="#9a9a9a" stroke-width="0.7" fill="none"/>
<path d="M466.3 33.2C462.4 31.2 462.6 27.2 465.4 26.6C467 26.3 467.8 27.6 468.4 28.8C469.4 27.2 471.2 26.4 472.4 27.6C473.6 29.4 470.6 33 467.6 34.2Z" fill="none" stroke="#222" stroke-width="0.8"/>
<path d="M469.2 33.6L474.6 26.2L476.2 27.4L470.8 34.6L468.8 35.4Z" fill="#1a1a1a"/>
<circle cx="464.8" cy="32.4" r="0.7" fill="#222"/><circle cx="467.8" cy="34.4" r="0.7" fill="#222"/>
<path d="M478.9 43.6l1.3 -1.3" stroke="#9a9a9a" stroke-width="0.7" fill="none"/>
<polygon points="487.20,30.20 491.40,32.30 491.40,37.10 487.20,35.00" fill="#2e2e2e" stroke="#1c1c1c" stroke-width="0.5" stroke-linejoin="round" /><polygon points="495.60,30.20 491.40,32.30 491.40,37.10 495.60,35.00" fill="#5a5a5a" stroke="#1c1c1c" stroke-width="0.5" stroke-linejoin="round" /><polygon points="491.40,28.10 495.60,30.20 491.40,32.30 487.20,30.20" fill="#fff" stroke="#1c1c1c" stroke-width="0.5" stroke-linejoin="round" />
<path d="M492.4 29.6L496.6 24.8" stroke="#1a1a1a" stroke-width="1.3"/>
<path d="M501.9 43.6l1.3 -1.3" stroke="#9a9a9a" stroke-width="0.7" fill="none"/>
<polygon points="508.40,30.20 512.60,32.30 512.60,37.10 508.40,35.00" fill="#2e2e2e" stroke="#1c1c1c" stroke-width="0.5" stroke-linejoin="round" /><polygon points="516.80,30.20 512.60,32.30 512.60,37.10 516.80,35.00" fill="#5a5a5a" stroke="#1c1c1c" stroke-width="0.5" stroke-linejoin="round" /><polygon points="512.60,28.10 516.80,30.20 512.60,32.30 508.40,30.20" fill="#fff" stroke="#1c1c1c" stroke-width="0.5" stroke-linejoin="round" />
<path d="M517.6 24.6V31M514.8 28.6H521.4M520.2 27.4L521.6 28.6L520.2 29.8M516.5 25.8L517.6 24.4L518.7 25.8" stroke="#1a1a1a" stroke-width="0.7" fill="none"/>
<path d="M524.4 43.6l1.3 -1.3" stroke="#9a9a9a" stroke-width="0.7" fill="none"/>
<polygon points="532.50,26.95 534.80,28.10 534.80,30.80 532.50,29.65" fill="#2e2e2e" stroke="#1c1c1c" stroke-width="0.5" stroke-linejoin="round" /><polygon points="537.10,26.95 534.80,28.10 534.80,30.80 537.10,29.65" fill="#5a5a5a" stroke="#1c1c1c" stroke-width="0.5" stroke-linejoin="round" /><polygon points="534.80,25.80 537.10,26.95 534.80,28.10 532.50,26.95" fill="#ddd" stroke="#1c1c1c" stroke-width="0.5" stroke-linejoin="round" />
<polygon points="532.50,32.75 534.80,33.90 534.80,36.60 532.50,35.45" fill="#2e2e2e" stroke="#1c1c1c" stroke-width="0.5" stroke-linejoin="round" /><polygon points="537.10,32.75 534.80,33.90 534.80,36.60 537.10,35.45" fill="#5a5a5a" stroke="#1c1c1c" stroke-width="0.5" stroke-linejoin="round" /><polygon points="534.80,31.60 537.10,32.75 534.80,33.90 532.50,32.75" fill="#ddd" stroke="#1c1c1c" stroke-width="0.5" stroke-linejoin="round" />
<polygon points="537.90,26.95 540.20,28.10 540.20,30.80 537.90,29.65" fill="#2e2e2e" stroke="#1c1c1c" stroke-width="0.5" stroke-linejoin="round" /><polygon points="542.50,26.95 540.20,28.10 540.20,30.80 542.50,29.65" fill="#5a5a5a" stroke="#1c1c1c" stroke-width="0.5" stroke-linejoin="round" /><polygon points="540.20,25.80 542.50,26.95 540.20,28.10 537.90,26.95" fill="#ddd" stroke="#1c1c1c" stroke-width="0.5" stroke-linejoin="round" />
<polygon points="537.90,32.75 540.20,33.90 540.20,36.60 537.90,35.45" fill="#2e2e2e" stroke="#1c1c1c" stroke-width="0.5" stroke-linejoin="round" /><polygon points="542.50,32.75 540.20,33.90 540.20,36.60 542.50,35.45" fill="#5a5a5a" stroke="#1c1c1c" stroke-width="0.5" stroke-linejoin="round" /><polygon points="540.20,31.60 542.50,32.75 540.20,33.90 537.90,32.75" fill="#ddd" stroke="#1c1c1c" stroke-width="0.5" stroke-linejoin="round" />
<path d="M547.0 43.6l1.3 -1.3" stroke="#9a9a9a" stroke-width="0.7" fill="none"/>
<circle cx="563.6" cy="29.4" r="3.4" fill="none" stroke="#333" stroke-width="0.6"/>
<polygon points="556.10,31.05 559.20,32.60 559.20,36.10 556.10,34.55" fill="#2e2e2e" stroke="#1c1c1c" stroke-width="0.5" stroke-linejoin="round" /><polygon points="562.30,31.05 559.20,32.60 559.20,36.10 562.30,34.55" fill="#5a5a5a" stroke="#1c1c1c" stroke-width="0.5" stroke-linejoin="round" /><polygon points="559.20,29.50 562.30,31.05 559.20,32.60 556.10,31.05" fill="#fff" stroke="#1c1c1c" stroke-width="0.5" stroke-linejoin="round" />
<path d="M555 26.4h1.2M555 26.4v1.2M566.8 26.4h-1.2M566.8 26.4v1.2M555 37.6h1.2M555 37.6v-1.2M566.8 37.6h-1.2M566.8 37.6v-1.2" stroke="#333" stroke-width="0.7" fill="none"/>
<path d="M547.4 43.6l1.3 -1.3" stroke="#9a9a9a" stroke-width="0.7" fill="none"/>
<path d="M570.4 43.6l1.3 -1.3" stroke="#9a9a9a" stroke-width="0.7" fill="none"/>
<polygon points="578.40,29.40 585.40,26.40 589.20,28.60 582.20,31.80" fill="#fff" stroke="#1c1c1c" stroke-width="0.5" stroke-linejoin="round" /><polygon points="578.40,29.40 582.20,31.80 582.20,37.00 578.40,34.60" fill="#2e2e2e" stroke="#1c1c1c" stroke-width="0.5" stroke-linejoin="round" /><polygon points="582.20,31.80 589.20,28.60 589.20,33.80 582.20,37.00" fill="#555" stroke="#1c1c1c" stroke-width="0.5" stroke-linejoin="round" />
<path d="M593.4 43.6l1.3 -1.3" stroke="#9a9a9a" stroke-width="0.7" fill="none"/>
<polygon points="600.70,28.55 605.00,30.70 605.00,36.80 600.70,34.65" fill="#2e2e2e" stroke="#1c1c1c" stroke-width="0.5" stroke-linejoin="round" /><polygon points="609.30,28.55 605.00,30.70 605.00,36.80 609.30,34.65" fill="#5a5a5a" stroke="#1c1c1c" stroke-width="0.5" stroke-linejoin="round" /><polygon points="605.00,26.40 609.30,28.55 605.00,30.70 600.70,28.55" fill="#fff" stroke="#1c1c1c" stroke-width="0.5" stroke-linejoin="round" />
<rect x="609.6" y="26.2" width="2.2" height="10.8" fill="#f8f8f8" stroke="#333" stroke-width="0.6"/><path d="M609.6 28.4h1M609.6 30.6h1M609.6 32.8h1M609.6 35h1" stroke="#333" stroke-width="0.4"/>
<path d="M624 27.2H633.6V29.8H630.4V36.8H627.2V29.8H624Z" fill="#111"/>
<g transform="translate(653 29.8) rotate(45)"><path d="M-3.4 4.2V-0.6A3.4 3.4 0 0 1 3.4 -0.6V4.2" fill="none" stroke="#222" stroke-width="2.6"/><path d="M-3.4 4.2V-0.6A3.4 3.4 0 0 1 3.4 -0.6V4.2" fill="none" stroke="#f2f2f2" stroke-width="1.3"/><path d="M-4.7 2.6h2.6v2h-2.6zM2.1 2.6h2.6v2h-2.6z" fill="#111"/></g>
<polygon points="692.20,28.30 697.60,31.00 697.60,36.80 692.20,34.10" fill="#8a8a8a" stroke="#8a8a8a" stroke-width="0.4" stroke-linejoin="round" /><polygon points="703.00,28.30 697.60,31.00 697.60,36.80 703.00,34.10" fill="#9a9a9a" stroke="#8a8a8a" stroke-width="0.4" stroke-linejoin="round" /><polygon points="697.60,25.60 703.00,28.30 697.60,31.00 692.20,28.30" fill="#fff" stroke="#8a8a8a" stroke-width="0.4" stroke-linejoin="round" />
<path d="M8.2 27.4L15.4 29.4L23.4 26.8L16.4 40.4Z" fill="#1b9ad0"/><path d="M15.4 29.4L23.4 26.8L16.4 40.4Z" fill="#0e6fa3"/><path d="M8.2 27.4L15.4 29.4L23.4 26.8L15.8 25.2Z" fill="#8fd6f2"/>
<path d="M1.2 7.2L4.6 8.4L9 6.8L5.4 13.4Z" fill="#1b8fc4"/><path d="M4.6 8.4L9 6.8L5.4 13.4Z" fill="#0d5f8f"/>
<path d="M105.2 32.4L109 35.2L112.8 32.4" fill="none" stroke="#222" stroke-width="1.4"/>
<path d="M955 10.2H960.6" stroke="#333" stroke-width="0.8"/>
<rect x="979.6" y="8.2" width="4" height="4" fill="none" stroke="#333" stroke-width="0.7"/><path d="M980.8 8.2V7H984.8V11H983.6" fill="none" stroke="#333" stroke-width="0.7"/>
<path d="M1003.6 7L1008.6 12M1008.6 7L1003.6 12" stroke="#222" stroke-width="0.8"/>
<path d="M1019.6 309.4L1016.4 312L1019.6 314.6Z" fill="#fff"/>
<path d="M993.8 117.6V127.9M988.7 122.75H998.9" stroke="#222" stroke-width="0.7"/>
<path d="M992.7 118.9L993.8 117.3L994.9 118.9ZM992.7 126.6L993.8 128.2L994.9 126.6ZM989.9 121.65L988.3 122.75L989.9 123.85ZM997.7 121.65L999.3 122.75L997.7 123.85Z" fill="#222"/>
<polygon points="991.10,139.45 993.80,140.80 993.80,144.30 991.10,142.95" fill="#2e2e2e" stroke="#1c1c1c" stroke-width="0.5" stroke-linejoin="round" /><polygon points="996.50,139.45 993.80,140.80 993.80,144.30 996.50,142.95" fill="#5a5a5a" stroke="#1c1c1c" stroke-width="0.5" stroke-linejoin="round" /><polygon points="993.80,138.10 996.50,139.45 993.80,140.80 991.10,139.45" fill="#fff" stroke="#1c1c1c" stroke-width="0.5" stroke-linejoin="round" />
<path d="M989.6 137.6A5.6 5.6 0 0 0 990.8 146M998 144.8A5.6 5.6 0 0 0 996.8 136.4" fill="none" stroke="#222" stroke-width="0.8"/><path d="M989.9 145.2L992 146.4L990.2 147.4ZM997.8 137.2L995.7 136L997.5 135Z" fill="#222"/>
<circle cx="992.5" cy="158.4" r="3.7" fill="#f6f6f6" stroke="#222" stroke-width="0.8"/><path d="M995.2 161.2L998 164" stroke="#111" stroke-width="1.7" stroke-linecap="round"/>
<line x1="987.5" y1="170.5" x2="1000.5" y2="170.5" stroke="#cfcfcf" stroke-width="0.8"/>
<line x1="987.5" y1="268.0" x2="1000.5" y2="268.0" stroke="#cfcfcf" stroke-width="0.8"/>
<polygon points="990.70,181.10 993.70,182.60 993.70,186.40 990.70,184.90" fill="#2e2e2e" stroke="#1c1c1c" stroke-width="0.5" stroke-linejoin="round" /><polygon points="996.70,181.10 993.70,182.60 993.70,186.40 996.70,184.90" fill="#5a5a5a" stroke="#1c1c1c" stroke-width="0.5" stroke-linejoin="round" /><polygon points="993.70,179.60 996.70,181.10 993.70,182.60 990.70,181.10" fill="#fff" stroke="#1c1c1c" stroke-width="0.5" stroke-linejoin="round" />
<path d="M988.6 179.6V177.6H990.8M996.6 177.6H998.8V179.6M998.8 186.4V188.4H996.6M990.8 188.4H988.6V186.4" fill="none" stroke="#222" stroke-width="0.8"/>
<circle cx="996.4" cy="198" r="3.2" fill="none" stroke="#444" stroke-width="0.5"/>
<polygon points="988.70,199.35 992.40,201.20 992.40,205.70 988.70,203.85" fill="#2e2e2e" stroke="#1c1c1c" stroke-width="0.5" stroke-linejoin="round" /><polygon points="996.10,199.35 992.40,201.20 992.40,205.70 996.10,203.85" fill="#5a5a5a" stroke="#1c1c1c" stroke-width="0.5" stroke-linejoin="round" /><polygon points="992.40,197.50 996.10,199.35 992.40,201.20 988.70,199.35" fill="#fff" stroke="#1c1c1c" stroke-width="0.5" stroke-linejoin="round" />
<path d="M988.2 220C990.4 216.4 997 216.4 999.2 220C997 223.6 990.4 223.6 988.2 220Z" fill="#f4f4f4" stroke="#222" stroke-width="0.7"/><circle cx="993.7" cy="220" r="1.7" fill="#444"/>
<path d="M989.4 236.2C991 233.8 996.6 233.8 998.4 236.2C996.6 238.4 991 238.4 989.4 236.2Z" fill="#f4f4f4" stroke="#222" stroke-width="0.6"/><circle cx="994" cy="236.1" r="1.1" fill="#333"/>
<path d="M988.2 235H990M989.6 238.6H998.4M989.2 240.6H998.8M988.8 242.6H999.2M991.4 238.6L990.8 242.6M993.8 238.6V242.6M996.4 238.6L997 242.6M989.6 238.6L988.8 242.6M998.4 238.6L999.2 242.6" stroke="#222" stroke-width="0.5" fill="none"/>
<path d="M988.4 254.2H991L991.8 252.6H995.8L996.6 254.2H999.2V262H988.4Z" fill="#1c1c1c"/><circle cx="993.8" cy="257.9" r="2.4" fill="#f0f0f0"/><circle cx="993.8" cy="257.9" r="1.2" fill="#222"/>
<circle cx="996.8" cy="277.2" r="2.4" fill="#d8d8d8" stroke="#999" stroke-width="0.4"/>
<polygon points="988.80,280.00 993.20,277.80 998.00,280.00 993.40,282.40" fill="#eee" stroke="#1c1c1c" stroke-width="0.5" stroke-linejoin="round" /><polygon points="988.80,280.00 993.40,282.40 993.40,286.20 988.80,283.80" fill="#222" stroke="#1c1c1c" stroke-width="0.5" stroke-linejoin="round" /><polygon points="993.40,282.40 998.00,280.00 998.00,283.80 993.40,286.20" fill="#555" stroke="#1c1c1c" stroke-width="0.5" stroke-linejoin="round" />
<path d="M995.2 280.6L997.4 276.6" stroke="#111" stroke-width="0.9"/>
<path d="M988 276.4h.8M988 286.4h.8M998.6 286.4h.8" stroke="#333" stroke-width="0.7"/>
<ellipse cx="994.4" cy="302" rx="4.4" ry="3.8" fill="none" stroke="#333" stroke-width="0.6"/><path d="M989.4 306.6L999 296.6M990.6 307L999.6 297.8" stroke="#222" stroke-width="0.6"/><path d="M989 298.4C989.6 300.4 990.4 302.6 992 303.8M991 307.4H997" stroke="#222" stroke-width="0.6" fill="none"/><circle cx="989.6" cy="298" r="0.9" fill="#222"/><circle cx="992.6" cy="303.6" r="0.8" fill="#222"/>
<g filter="url(#vcs)" opacity="0.35"><polygon points="972,88 986,100 1005,90 1003,84" fill="#666"/></g>
<polygon points="989.00,57.90 1006.90,67.10 984.70,75.00 968.30,66.40" fill="#f6f6f6" stroke="#bdbdbd" stroke-width="0.5" stroke-linejoin="round" stroke-dasharray="1.6 1"/><polygon points="968.30,66.40 984.70,75.00 985.40,97.90 970.40,85.70" fill="#e4e4e4" stroke="#bdbdbd" stroke-width="0.5" stroke-linejoin="round" stroke-dasharray="1.6 1"/><polygon points="984.70,75.00 1006.90,67.10 1004.00,88.60 985.40,97.90" fill="#f0f0f0" stroke="#bdbdbd" stroke-width="0.5" stroke-linejoin="round" stroke-dasharray="1.6 1"/>
<polygon points="984.70,72.60 987.60,73.80 987.40,77.00 984.80,78.40 982.20,77.00 982.00,73.80" fill="#8dd3f0" />
<g font-family="Liberation Sans, Noto Sans CJK JP, sans-serif" font-size="10.5" fill="#2a2a2a" text-anchor="middle"><text transform="matrix(1.12 -0.40 0.80 0.42 991.2 68.6)" x="0" y="0">上</text><text transform="matrix(0.80 0.55 0.03 1.05 976.2 86.6)" x="0" y="0" fill="#444">左</text><text transform="matrix(0.95 -0.36 -0.06 1.02 995.2 87.6)" x="0" y="0">前</text></g>
</svg>
</body></html>
